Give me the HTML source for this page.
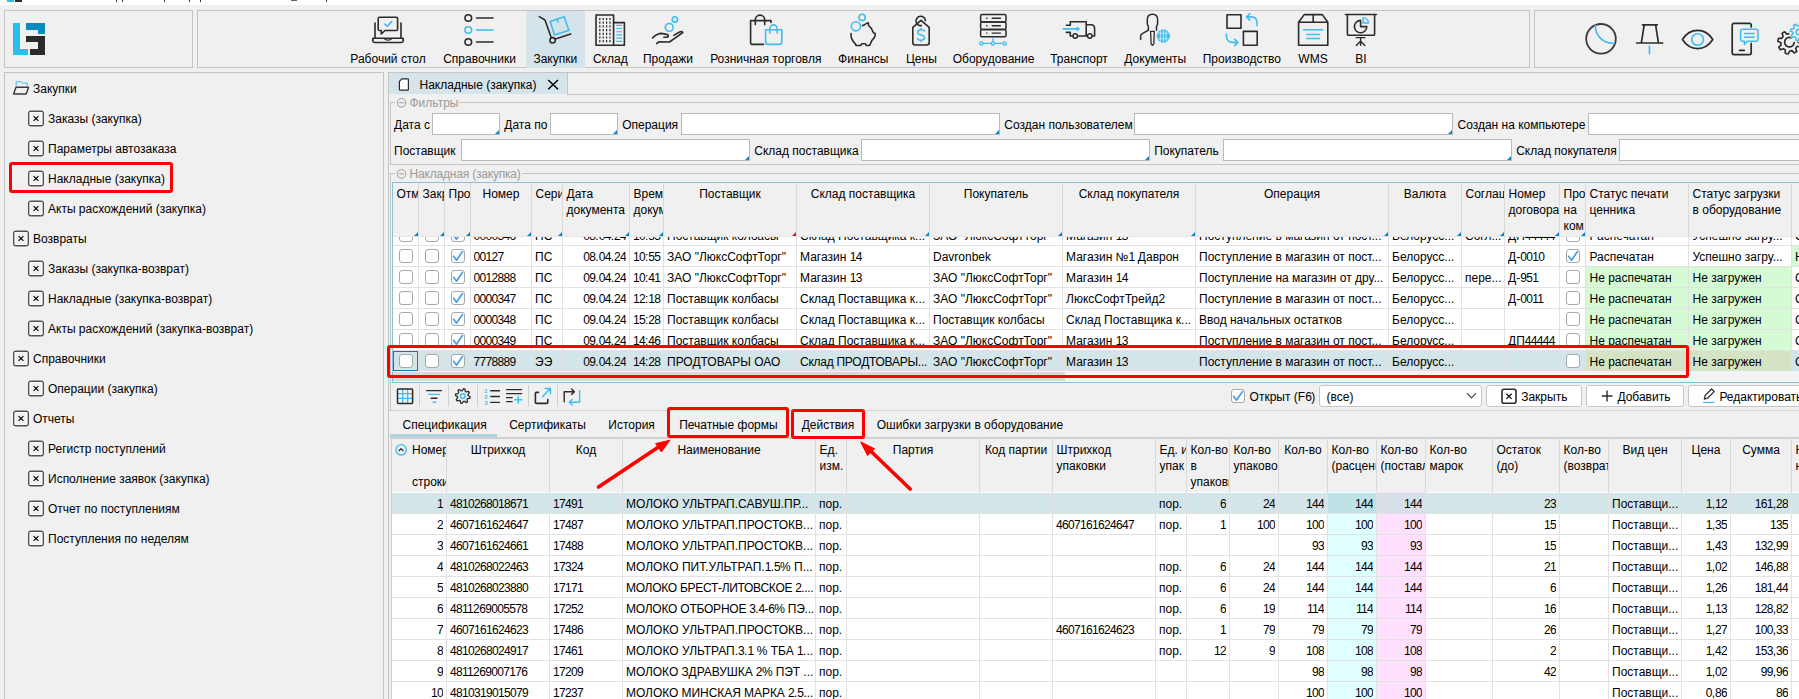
<!DOCTYPE html><html><head><meta charset="utf-8"><style>
html,body{margin:0;padding:0;}
body{width:1799px;height:699px;overflow:hidden;position:relative;background:#f0f0f0;font-family:"Liberation Sans",sans-serif;font-size:12px;color:#000;}
.a{position:absolute;}
.t{white-space:pre;line-height:16px;}
.g{color:#9a9a9a;}
.d{letter-spacing:-0.67px;}
.c{overflow:hidden;}
svg{overflow:visible}
</style></head><body><div class="a" style="left:0px;top:0px;width:1799px;height:5px;background:#fff"></div>
<div class="a" style="left:7px;top:0px;width:7px;height:2px;background:#29c0f0"></div>
<div class="a" style="left:15px;top:0px;width:7px;height:2px;background:#2b2b2b"></div>
<div class="a" style="left:116px;top:0px;width:1px;height:2px;background:#3a2a4a"></div>
<div class="a" style="left:122px;top:0px;width:1px;height:2px;background:#3a2a4a"></div>
<div class="a" style="left:164px;top:0px;width:1px;height:2px;background:#3a2a4a"></div>
<div class="a" style="left:189px;top:0px;width:1px;height:2px;background:#3a2a4a"></div>
<div class="a" style="left:200px;top:0px;width:1px;height:2px;background:#3a2a4a"></div>
<div class="a" style="left:326px;top:0px;width:1px;height:2px;background:#3a2a4a"></div>
<div class="a" style="left:291px;top:0px;width:6px;height:1px;background:#6a5a7a"></div>
<div class="a" style="left:4px;top:10px;width:189px;height:58px;border:1px solid #c4c4c4;box-sizing:border-box"></div>
<div class="a" style="left:197px;top:10px;width:1333px;height:58px;border:1px solid #c4c4c4;box-sizing:border-box"></div>
<div class="a" style="left:1534px;top:10px;width:300px;height:58px;border:1px solid #c4c4c4;box-sizing:border-box"></div>
<svg class="a" style="left:13px;top:23px" width="33" height="33" viewBox="0 0 33 33"><path d="M0 0h7v26h8v6H0z" fill="#29c0f0"/><path d="M13 0h19v11h-7V7H13z" fill="#0a8bbf"/><path d="M13 13h19v19H17v-6h8v-7H13z" fill="#2b2b2b"/></svg>
<div class="a" style="left:526px;top:11px;width:59px;height:57px;background:#d5e4ea;border-radius:3px 3px 0 0"></div>
<div class="a t " style="left:328px;top:51px;width:120px;text-align:center;">Рабочий стол</div>
<div class="a t " style="left:419.5px;top:51px;width:120px;text-align:center;">Справочники</div>
<div class="a t " style="left:495.3px;top:51px;width:120px;text-align:center;">Закупки</div>
<div class="a t " style="left:550.3px;top:51px;width:120px;text-align:center;">Склад</div>
<div class="a t " style="left:608px;top:51px;width:120px;text-align:center;">Продажи</div>
<div class="a t " style="left:705.8px;top:51px;width:120px;text-align:center;">Розничная торговля</div>
<div class="a t " style="left:803.3px;top:51px;width:120px;text-align:center;">Финансы</div>
<div class="a t " style="left:861.4px;top:51px;width:120px;text-align:center;">Цены</div>
<div class="a t " style="left:933.5px;top:51px;width:120px;text-align:center;">Оборудование</div>
<div class="a t " style="left:1019px;top:51px;width:120px;text-align:center;">Транспорт</div>
<div class="a t " style="left:1095.3px;top:51px;width:120px;text-align:center;">Документы</div>
<div class="a t " style="left:1181.8px;top:51px;width:120px;text-align:center;">Производство</div>
<div class="a t " style="left:1253px;top:51px;width:120px;text-align:center;">WMS</div>
<div class="a t " style="left:1301px;top:51px;width:120px;text-align:center;">BI</div>
<svg class="a" style="left:0;top:0" width="1799" height="70" viewBox="0 0 1799 70"><path d="M375 23V38M401 23V38" fill="none" stroke="#2b2b2b" stroke-width="1.6" stroke-linecap="round" stroke-linejoin="round" /><path d="M372.8 38.2H403.2V40.5Q403.2 42.5 401.2 42.5H374.8Q372.8 42.5 372.8 40.5Z" fill="none" stroke="#2b2b2b" stroke-width="1.6" stroke-linecap="round" stroke-linejoin="round" /><path d="M384 38.6Q385.5 40.2 388 40.2Q390.5 40.2 392 38.6" fill="none" stroke="#2b2b2b" stroke-width="1.2" stroke-linecap="round" stroke-linejoin="round" /><path d="M379.5 17.3H396.3Q397.6 17.3 397.6 18.6V29.2Q397.6 30.5 396.3 30.5H385L381.3 34V30.5H379.5Q378.2 30.5 378.2 29.2V18.6Q378.2 17.3 379.5 17.3Z" fill="none" stroke="#2b2b2b" stroke-width="1.6" stroke-linecap="round" stroke-linejoin="round" /><path d="M384.6 24L387.4 26.3L391.6 21.6" fill="none" stroke="#3dbdf0" stroke-width="1.6" stroke-linecap="round" stroke-linejoin="round" /><circle cx="468.3" cy="18" r="3.3" fill="none" stroke="#2b2b2b" stroke-width="1.6"/><path d="M476.5 18H493" fill="none" stroke="#2b2b2b" stroke-width="1.6" stroke-linecap="round" stroke-linejoin="round" /><circle cx="468.3" cy="30" r="3.3" fill="none" stroke="#3dbdf0" stroke-width="1.6"/><path d="M476.5 30H493" fill="none" stroke="#3dbdf0" stroke-width="1.6" stroke-linecap="round" stroke-linejoin="round" /><circle cx="468.3" cy="42" r="3.3" fill="none" stroke="#2b2b2b" stroke-width="1.6"/><path d="M476.5 42H493" fill="none" stroke="#2b2b2b" stroke-width="1.6" stroke-linecap="round" stroke-linejoin="round" /><path d="M539.3 16.6L545 20L551.2 37.6" fill="none" stroke="#2b2b2b" stroke-width="1.6" stroke-linecap="round" stroke-linejoin="round" /><circle cx="552.6" cy="40.3" r="2.7" fill="none" stroke="#2b2b2b" stroke-width="1.6"/><path d="M555.4 39.1L570.8 34.1" fill="none" stroke="#2b2b2b" stroke-width="1.6" stroke-linecap="round" stroke-linejoin="round" /><path d="M550.2 21.4L564.1 16.7L568.9 30.3L554.5 35Z" fill="none" stroke="#3dbdf0" stroke-width="1.6" stroke-linecap="round" stroke-linejoin="round" /><path d="M557.1 19L558.2 22.3" fill="none" stroke="#3dbdf0" stroke-width="1.4" stroke-linecap="round" stroke-linejoin="round" /><path d="M596 15H613.6V45.3H596Z" fill="none" stroke="#2b2b2b" stroke-width="1.6" stroke-linecap="round" stroke-linejoin="round" /><path d="M613.6 22.6H624.4V45.3H613.6" fill="none" stroke="#2b2b2b" stroke-width="1.6" stroke-linecap="round" stroke-linejoin="round" /><path d="M599.1999999999999 17.9h1.2v2.2h-1.2z" fill="#2b2b2b"/><path d="M599.1999999999999 21.599999999999998h1.2v2.2h-1.2z" fill="#2b2b2b"/><path d="M599.1999999999999 25.299999999999997h1.2v2.2h-1.2z" fill="#2b2b2b"/><path d="M599.1999999999999 29.0h1.2v2.2h-1.2z" fill="#2b2b2b"/><path d="M599.1999999999999 32.699999999999996h1.2v2.2h-1.2z" fill="#2b2b2b"/><path d="M599.1999999999999 36.4h1.2v2.2h-1.2z" fill="#2b2b2b"/><path d="M599.1999999999999 40.1h1.2v2.2h-1.2z" fill="#2b2b2b"/><path d="M602.6 17.9h1.2v2.2h-1.2z" fill="#2b2b2b"/><path d="M602.6 21.599999999999998h1.2v2.2h-1.2z" fill="#2b2b2b"/><path d="M602.6 25.299999999999997h1.2v2.2h-1.2z" fill="#2b2b2b"/><path d="M602.6 29.0h1.2v2.2h-1.2z" fill="#2b2b2b"/><path d="M602.6 32.699999999999996h1.2v2.2h-1.2z" fill="#2b2b2b"/><path d="M602.6 36.4h1.2v2.2h-1.2z" fill="#2b2b2b"/><path d="M602.6 40.1h1.2v2.2h-1.2z" fill="#2b2b2b"/><path d="M606.0 17.9h1.2v2.2h-1.2z" fill="#2b2b2b"/><path d="M606.0 21.599999999999998h1.2v2.2h-1.2z" fill="#2b2b2b"/><path d="M606.0 25.299999999999997h1.2v2.2h-1.2z" fill="#2b2b2b"/><path d="M606.0 29.0h1.2v2.2h-1.2z" fill="#2b2b2b"/><path d="M606.0 32.699999999999996h1.2v2.2h-1.2z" fill="#2b2b2b"/><path d="M606.0 36.4h1.2v2.2h-1.2z" fill="#2b2b2b"/><path d="M606.0 40.1h1.2v2.2h-1.2z" fill="#2b2b2b"/><path d="M609.4 17.9h1.2v2.2h-1.2z" fill="#2b2b2b"/><path d="M609.4 21.599999999999998h1.2v2.2h-1.2z" fill="#2b2b2b"/><path d="M609.4 25.299999999999997h1.2v2.2h-1.2z" fill="#2b2b2b"/><path d="M609.4 29.0h1.2v2.2h-1.2z" fill="#2b2b2b"/><path d="M609.4 32.699999999999996h1.2v2.2h-1.2z" fill="#2b2b2b"/><path d="M609.4 36.4h1.2v2.2h-1.2z" fill="#2b2b2b"/><path d="M609.4 40.1h1.2v2.2h-1.2z" fill="#2b2b2b"/><path d="M616.6 25.30H621.6" fill="none" stroke="#3dbdf0" stroke-width="1.2" stroke-linecap="round" stroke-linejoin="round" /><path d="M616.6 28.52H621.6" fill="none" stroke="#3dbdf0" stroke-width="1.2" stroke-linecap="round" stroke-linejoin="round" /><path d="M616.6 31.74H621.6" fill="none" stroke="#3dbdf0" stroke-width="1.2" stroke-linecap="round" stroke-linejoin="round" /><path d="M616.6 34.96H621.6" fill="none" stroke="#3dbdf0" stroke-width="1.2" stroke-linecap="round" stroke-linejoin="round" /><path d="M616.6 38.18H621.6" fill="none" stroke="#3dbdf0" stroke-width="1.2" stroke-linecap="round" stroke-linejoin="round" /><path d="M616.6 41.40H621.6" fill="none" stroke="#3dbdf0" stroke-width="1.2" stroke-linecap="round" stroke-linejoin="round" /><circle cx="669.2" cy="27.4" r="3.9" fill="none" stroke="#3dbdf0" stroke-width="1.6"/><circle cx="674.9" cy="19.4" r="2.7" fill="none" stroke="#3dbdf0" stroke-width="1.6"/><path d="M652.5 37.8C655.5 35.2 658.5 33.4 661.5 33.4L667.6 34.6C669 35.3 668.4 37.1 666.4 37.2L663.8 37.2" fill="none" stroke="#2b2b2b" stroke-width="1.6" stroke-linecap="round" stroke-linejoin="round" /><path d="M656.6 43.6L658.8 41.9L669.5 42L682.8 32.6C682.5 31.4 680.8 31.4 679.2 32.3L673.8 35.4" fill="none" stroke="#2b2b2b" stroke-width="1.6" stroke-linecap="round" stroke-linejoin="round" /><path d="M771 22.5V20.6H750.6V42.4Q750.6 44.4 752.6 44.4H763.5" fill="none" stroke="#2b2b2b" stroke-width="1.6" stroke-linecap="round" stroke-linejoin="round" /><path d="M755.3 24.6V19.8A4.7 4.7 0 0 1 764.7 19.8V24.6" fill="none" stroke="#2b2b2b" stroke-width="1.6" stroke-linecap="round" stroke-linejoin="round" /><path d="M765.6 29.8H781.8V41.9Q781.8 44.4 779.3 44.4H768.1Q765.6 44.4 765.6 41.9Z" fill="none" stroke="#3dbdf0" stroke-width="1.6" stroke-linecap="round" stroke-linejoin="round" /><path d="M769.8 33V28.6A3.7 3.7 0 0 1 777.2 28.6V33" fill="none" stroke="#3dbdf0" stroke-width="1.6" stroke-linecap="round" stroke-linejoin="round" /><circle cx="855.9" cy="26.3" r="4.6" fill="none" stroke="#3dbdf0" stroke-width="1.6"/><circle cx="862.1" cy="17.4" r="3.1" fill="none" stroke="#3dbdf0" stroke-width="1.6"/><path d="M851 33.5C850.5 38 852.5 41 855 43.3L856.2 45.5H860.8L861.6 43.8H865.4L866.2 45.5H869.6L871.8 40.6C873.6 39 875.2 37.2 875.2 34.8V33.6L873.4 32.8C872.3 29.6 870.6 27 868.4 25.2V22.8C866.8 23 865.6 23.8 864.6 24.8L862.6 25.6" fill="none" stroke="#2b2b2b" stroke-width="1.6" stroke-linecap="round" stroke-linejoin="round" /><path d="M921 20.3L929.2 27.3V42.5Q929.2 45 926.7 45H915.3Q912.8 45 912.8 42.5V27.3Z" fill="none" stroke="#2b2b2b" stroke-width="1.6" stroke-linecap="round" stroke-linejoin="round" /><path d="M925.4 20.6A4.7 4.7 0 1 0 921.3 25.6" fill="none" stroke="#2b2b2b" stroke-width="1.6" stroke-linecap="round" stroke-linejoin="round" /><path d="M924.6 31.1Q923.8 29.8 921.1 29.8Q917.7 29.8 917.7 32.3Q917.7 34.5 921 34.9Q924.5 35.3 924.5 37.7Q924.5 40.2 921 40.2Q918.2 40.2 917.4 38.7M921.1 28.3V29.8M921.1 40.2V41.7" fill="none" stroke="#3dbdf0" stroke-width="1.5" stroke-linecap="round" stroke-linejoin="round" /><path d="M982 14.6H1004.6Q1006 14.6 1006 16.0V20.6Q1006 22.0 1004.6 22.0H982Q980.6 22.0 980.6 20.6V16.0Q980.6 14.6 982 14.6Z" fill="none" stroke="#2b2b2b" stroke-width="1.5" stroke-linecap="round" stroke-linejoin="round" /><path d="M986.2 17.60h1.3v1.4h-1.3z" fill="#2b2b2b"/><path d="M992.2 18.30H1000.4" fill="none" stroke="#2b2b2b" stroke-width="1.4" stroke-linecap="round" stroke-linejoin="round" /><path d="M982 22.0H1004.6Q1006 22.0 1006 23.4V28.0Q1006 29.4 1004.6 29.4H982Q980.6 29.4 980.6 28.0V23.4Q980.6 22.0 982 22.0Z" fill="none" stroke="#2b2b2b" stroke-width="1.5" stroke-linecap="round" stroke-linejoin="round" /><path d="M986.2 25.00h1.3v1.4h-1.3z" fill="#2b2b2b"/><path d="M992.2 25.70H1000.4" fill="none" stroke="#2b2b2b" stroke-width="1.4" stroke-linecap="round" stroke-linejoin="round" /><path d="M982 29.4H1004.6Q1006 29.4 1006 30.799999999999997V35.4Q1006 36.8 1004.6 36.8H982Q980.6 36.8 980.6 35.4V30.799999999999997Q980.6 29.4 982 29.4Z" fill="none" stroke="#2b2b2b" stroke-width="1.5" stroke-linecap="round" stroke-linejoin="round" /><path d="M986.2 32.40h1.3v1.4h-1.3z" fill="#2b2b2b"/><path d="M992.2 33.10H1000.4" fill="none" stroke="#2b2b2b" stroke-width="1.4" stroke-linecap="round" stroke-linejoin="round" /><path d="M982.8 43.4H991.2M994.8 43.4H1002.8M993 37.8V41.6" fill="none" stroke="#3dbdf0" stroke-width="1.3" stroke-linecap="round" stroke-linejoin="round" /><circle cx="981.4" cy="43.4" r="1.6" fill="#f0f0f0" stroke="#3dbdf0" stroke-width="1.3"/><circle cx="993" cy="43.4" r="1.6" fill="#f0f0f0" stroke="#3dbdf0" stroke-width="1.3"/><circle cx="1004.6" cy="43.4" r="1.6" fill="#f0f0f0" stroke="#3dbdf0" stroke-width="1.3"/><path d="M1066.4 25.3H1070.3V21.7H1086.2V36M1086.2 24.7H1091.2C1093.2 24.7 1094.6 26.4 1094.6 28.6V36H1070.3V32.4H1066.4" fill="none" stroke="#2b2b2b" stroke-width="1.6" stroke-linecap="round" stroke-linejoin="round" /><circle cx="1075.2" cy="36" r="2.2" fill="#f0f0f0" stroke="#2b2b2b" stroke-width="1.5"/><circle cx="1089.8" cy="36" r="2.2" fill="#f0f0f0" stroke="#2b2b2b" stroke-width="1.5"/><path d="M1063.4 28.9H1077" fill="none" stroke="#3dbdf0" stroke-width="1.7" stroke-linecap="round" stroke-linejoin="round" /><path d="M1076.6 26.1L1080.2 28.9L1076.6 31.7Z" fill="#3dbdf0"/><path d="M1148.4 30.2V26.4Q1147.3 25.4 1147.3 23.2V19.6Q1147.3 14.3 1152.45 14.3Q1157.6 14.3 1157.6 19.6V23.2Q1157.6 25.4 1156.5 26.4V30.2" fill="none" stroke="#2b2b2b" stroke-width="1.5" stroke-linecap="round" stroke-linejoin="round" /><path d="M1148.4 30.2L1142 33.9Q1140.6 34.8 1140.6 36.4V39.4" fill="none" stroke="#2b2b2b" stroke-width="1.5" stroke-linecap="round" stroke-linejoin="round" /><path d="M1150.6 31.3H1154.3L1153.8 44L1152.45 45.4L1151.1 44Z" fill="none" stroke="#2b2b2b" stroke-width="1.3" stroke-linecap="round" stroke-linejoin="round" /><circle cx="1163.3" cy="36" r="6.3" fill="#3dbdf0" stroke="#3dbdf0" stroke-width="0.8"/><path d="M1160.6 30.8V41.2M1163.3 30V42M1166 30.8V41.2M1157.8 33.2H1168.8M1157.8 38.8H1168.8" fill="none" stroke="#e8f6fc" stroke-width="0.7" stroke-linecap="round" stroke-linejoin="round" /><path d="M1227 14.8H1241V28.2H1227Z" fill="none" stroke="#2b2b2b" stroke-width="1.6" stroke-linecap="round" stroke-linejoin="round" /><path d="M1243.4 31.4H1257.2V45.2H1243.4Z" fill="none" stroke="#2b2b2b" stroke-width="1.6" stroke-linecap="round" stroke-linejoin="round" /><path d="M1257 25.6V22C1257 19.2 1254.6 16.9 1251.8 16.9H1246.8M1249.9 13.7L1246.6 16.9L1249.9 20.1" fill="none" stroke="#3dbdf0" stroke-width="1.6" stroke-linecap="round" stroke-linejoin="round" /><path d="M1226.4 34V36.6C1226.4 40 1229 42.4 1232.2 42.4H1237.8M1234.7 39.2L1237.9 42.4L1234.7 45.6" fill="none" stroke="#3dbdf0" stroke-width="1.6" stroke-linecap="round" stroke-linejoin="round" /><path d="M1298.6 22.3V45.2H1327.8V22.3ZM1298.6 22.3L1304.2 14.6H1322.3L1327.8 22.3M1313.2 14.6V22.3" fill="none" stroke="#2b2b2b" stroke-width="1.6" stroke-linecap="round" stroke-linejoin="round" /><path d="M1303.4 29.8H1322.8M1306.8 34.4H1319.6M1306.8 38.6H1319.6" fill="none" stroke="#3dbdf0" stroke-width="1.5" stroke-linecap="round" stroke-linejoin="round" /><path d="M1345.4 14.5H1376.4M1347.4 14.7V34.2Q1347.4 35.3 1348.6 35.3H1373.4Q1374.6 35.3 1374.6 34.2V14.7" fill="none" stroke="#2b2b2b" stroke-width="1.6" stroke-linecap="round" stroke-linejoin="round" /><path d="M1360.6 20.4A6.2 6.2 0 1 0 1366.8 26.6H1360.6Z" fill="none" stroke="#2b2b2b" stroke-width="1.6" stroke-linecap="round" stroke-linejoin="round" /><path d="M1363.1 17.6A5.6 5.6 0 0 1 1368.5 23H1363.1Z" fill="none" stroke="#3dbdf0" stroke-width="1.4" stroke-linecap="round" stroke-linejoin="round" /><path d="M1356.2 37.6H1365M1360.6 37.6V45.4M1356.4 45.4L1360.6 41L1364.8 45.4" fill="none" stroke="#2b2b2b" stroke-width="1.4" stroke-linecap="round" stroke-linejoin="round" /><circle cx="1601" cy="38.8" r="14.8" fill="none" stroke="#3a3a3a" stroke-width="1.8"/><path d="M1595.4 25.3C1594.8 35.4 1603.6 44.2 1614.2 43.2" fill="none" stroke="#3dbdf0" stroke-width="1.6" stroke-linecap="round" stroke-linejoin="round" /><path d="M1642.5 24.8H1657.3M1644.2 24.8L1641.4 42.6M1655.6 24.8L1658.4 42.6M1636.6 43H1662.6" fill="none" stroke="#2b2b2b" stroke-width="1.7" stroke-linecap="round" stroke-linejoin="round" /><path d="M1649.5 46.2V53.8" fill="none" stroke="#3dbdf0" stroke-width="1.6" stroke-linecap="round" stroke-linejoin="round" /><path d="M1682.4 39.5C1690.2 27.4 1705 27.4 1712.8 39.5C1705 51.6 1690.2 51.6 1682.4 39.5Z" fill="none" stroke="#2b2b2b" stroke-width="1.7" stroke-linecap="round" stroke-linejoin="round" /><circle cx="1697.6" cy="39.5" r="5.8" fill="none" stroke="#3dbdf0" stroke-width="1.6"/><path d="M1751.2 27V25.2Q1751.2 23.4 1749.4 23.4H1734Q1732.2 23.4 1732.2 25.2V52.8Q1732.2 54.6 1734 54.6H1749.4Q1751.2 54.6 1751.2 52.8V43.4M1739.6 50.4H1744.2" fill="none" stroke="#2b2b2b" stroke-width="1.7" stroke-linecap="round" stroke-linejoin="round" /><path d="M1742.6 29.2H1756Q1758 29.2 1758 31.2V39.2Q1758 41.2 1756 41.2H1747.4L1744.4 44.4V41.2H1742.6Q1740.6 41.2 1740.6 39.2V31.2Q1740.6 29.2 1742.6 29.2Z" fill="none" stroke="#3dbdf0" stroke-width="1.5" stroke-linecap="round" stroke-linejoin="round" /><path d="M1744.6 33.6H1754.2M1744.6 37.2H1754.2" fill="none" stroke="#3dbdf0" stroke-width="1.5" stroke-linecap="round" stroke-linejoin="round" /><path d="M1790.56 30.86L1792.05 31.11L1793.51 31.55L1793.47 34.82L1794.42 35.42L1795.29 36.13L1798.38 35.06L1799.26 36.29L1799.97 37.63L1797.63 39.92L1797.89 41.01L1798.00 42.13L1800.94 43.56L1800.69 45.05L1800.25 46.51L1796.98 46.47L1796.38 47.42L1795.67 48.29L1796.74 51.38L1795.51 52.26L1794.17 52.97L1791.88 50.63L1790.79 50.89L1789.67 51.00L1788.24 53.94L1786.75 53.69L1785.29 53.25L1785.33 49.98L1784.38 49.38L1783.51 48.67L1780.42 49.74L1779.54 48.51L1778.83 47.17L1781.17 44.88L1780.91 43.79L1780.80 42.67L1777.86 41.24L1778.11 39.75L1778.55 38.29L1781.82 38.33L1782.42 37.38L1783.13 36.51L1782.06 33.42L1783.29 32.54L1784.63 31.83L1786.92 34.17L1788.01 33.91L1789.13 33.80Z" fill="none" stroke="#2b2b2b" stroke-width="1.6" stroke-linecap="round" stroke-linejoin="round" /><path d="M1792.2 38.2A4.8 4.8 0 1 0 1794.2 42.6" fill="none" stroke="#2b2b2b" stroke-width="1.7" stroke-linecap="round" stroke-linejoin="round" /><circle cx="1799" cy="32" r="10" fill="#f0f0f0"/><path d="M1799.86 23.44L1800.97 23.63L1802.04 23.96L1802.03 26.36L1802.74 26.80L1803.38 27.34L1805.66 26.56L1806.31 27.47L1806.84 28.47L1805.13 30.15L1805.32 30.97L1805.40 31.80L1807.56 32.86L1807.37 33.97L1807.04 35.04L1804.64 35.03L1804.20 35.74L1803.66 36.38L1804.44 38.66L1803.53 39.31L1802.53 39.84L1800.85 38.13L1800.03 38.32L1799.20 38.40L1798.14 40.56L1797.03 40.37L1795.96 40.04L1795.97 37.64L1795.26 37.20L1794.62 36.66L1792.34 37.44L1791.69 36.53L1791.16 35.53L1792.87 33.85L1792.68 33.03L1792.60 32.20L1790.44 31.14L1790.63 30.03L1790.96 28.96L1793.36 28.97L1793.80 28.26L1794.34 27.62L1793.56 25.34L1794.47 24.69L1795.47 24.16L1797.15 25.87L1797.97 25.68L1798.80 25.60Z" fill="none" stroke="#3dbdf0" stroke-width="1.5" stroke-linecap="round" stroke-linejoin="round" /><circle cx="1799" cy="32" r="2.8" fill="none" stroke="#3dbdf0" stroke-width="1.5"/></svg>
<div class="a" style="left:4px;top:72px;width:380px;height:700px;border:1px solid #c4c4c4;box-sizing:border-box"></div>
<div class="a t " style="left:33px;top:81px;">Закупки</div>
<div class="a t " style="left:48px;top:111px;">Заказы (закупка)</div>
<div class="a t " style="left:48px;top:141px;">Параметры автозаказа</div>
<div class="a t " style="left:48px;top:171px;">Накладные (закупка)</div>
<div class="a t " style="left:48px;top:201px;">Акты расхождений (закупка)</div>
<div class="a t " style="left:33px;top:231px;">Возвраты</div>
<div class="a t " style="left:48px;top:261px;">Заказы (закупка-возврат)</div>
<div class="a t " style="left:48px;top:291px;">Накладные (закупка-возврат)</div>
<div class="a t " style="left:48px;top:321px;">Акты расхождений (закупка-возврат)</div>
<div class="a t " style="left:33px;top:351px;">Справочники</div>
<div class="a t " style="left:48px;top:381px;">Операции (закупка)</div>
<div class="a t " style="left:33px;top:411px;">Отчеты</div>
<div class="a t " style="left:48px;top:441px;">Регистр поступлений</div>
<div class="a t " style="left:48px;top:471px;">Исполнение заявок (закупка)</div>
<div class="a t " style="left:48px;top:501px;">Отчет по поступлениям</div>
<div class="a t " style="left:48px;top:531px;">Поступления по неделям</div>
<svg class="a" style="left:0;top:0" width="384" height="699"><path d="M16.2 86.6V81.6H21L22.6 83.2H27.2V86" fill="none" stroke="#6cc6ee" stroke-width="1.3"/><path d="M16 87.2H28.6L26.2 94H13.6Z" fill="none" stroke="#3a3a3a" stroke-width="1.4" stroke-linejoin="round"/><rect x="28.8" y="111.3" width="14.4" height="14.4" rx="2.2" fill="none" stroke="#505050" stroke-width="1.6"/><rect x="30.1" y="112.6" width="11.8" height="11.8" fill="none" stroke="#fff" stroke-width="1"/><path d="M33.6 116.1L38.4 120.9M38.4 116.1L33.6 120.9" stroke="#000" stroke-width="1.15"/><rect x="28.8" y="141.3" width="14.4" height="14.4" rx="2.2" fill="none" stroke="#505050" stroke-width="1.6"/><rect x="30.1" y="142.6" width="11.8" height="11.8" fill="none" stroke="#fff" stroke-width="1"/><path d="M33.6 146.1L38.4 150.9M38.4 146.1L33.6 150.9" stroke="#000" stroke-width="1.15"/><rect x="28.8" y="171.3" width="14.4" height="14.4" rx="2.2" fill="none" stroke="#505050" stroke-width="1.6"/><rect x="30.1" y="172.6" width="11.8" height="11.8" fill="none" stroke="#fff" stroke-width="1"/><path d="M33.6 176.1L38.4 180.9M38.4 176.1L33.6 180.9" stroke="#000" stroke-width="1.15"/><rect x="28.8" y="201.3" width="14.4" height="14.4" rx="2.2" fill="none" stroke="#505050" stroke-width="1.6"/><rect x="30.1" y="202.6" width="11.8" height="11.8" fill="none" stroke="#fff" stroke-width="1"/><path d="M33.6 206.1L38.4 210.9M38.4 206.1L33.6 210.9" stroke="#000" stroke-width="1.15"/><rect x="13.8" y="231.3" width="14.4" height="14.4" rx="2.2" fill="none" stroke="#505050" stroke-width="1.6"/><rect x="15.1" y="232.6" width="11.8" height="11.8" fill="none" stroke="#fff" stroke-width="1"/><path d="M18.6 236.1L23.4 240.9M23.4 236.1L18.6 240.9" stroke="#000" stroke-width="1.15"/><rect x="28.8" y="261.3" width="14.4" height="14.4" rx="2.2" fill="none" stroke="#505050" stroke-width="1.6"/><rect x="30.1" y="262.6" width="11.8" height="11.8" fill="none" stroke="#fff" stroke-width="1"/><path d="M33.6 266.1L38.4 270.9M38.4 266.1L33.6 270.9" stroke="#000" stroke-width="1.15"/><rect x="28.8" y="291.3" width="14.4" height="14.4" rx="2.2" fill="none" stroke="#505050" stroke-width="1.6"/><rect x="30.1" y="292.6" width="11.8" height="11.8" fill="none" stroke="#fff" stroke-width="1"/><path d="M33.6 296.1L38.4 300.9M38.4 296.1L33.6 300.9" stroke="#000" stroke-width="1.15"/><rect x="28.8" y="321.3" width="14.4" height="14.4" rx="2.2" fill="none" stroke="#505050" stroke-width="1.6"/><rect x="30.1" y="322.6" width="11.8" height="11.8" fill="none" stroke="#fff" stroke-width="1"/><path d="M33.6 326.1L38.4 330.9M38.4 326.1L33.6 330.9" stroke="#000" stroke-width="1.15"/><rect x="13.8" y="351.3" width="14.4" height="14.4" rx="2.2" fill="none" stroke="#505050" stroke-width="1.6"/><rect x="15.1" y="352.6" width="11.8" height="11.8" fill="none" stroke="#fff" stroke-width="1"/><path d="M18.6 356.1L23.4 360.9M23.4 356.1L18.6 360.9" stroke="#000" stroke-width="1.15"/><rect x="28.8" y="381.3" width="14.4" height="14.4" rx="2.2" fill="none" stroke="#505050" stroke-width="1.6"/><rect x="30.1" y="382.6" width="11.8" height="11.8" fill="none" stroke="#fff" stroke-width="1"/><path d="M33.6 386.1L38.4 390.9M38.4 386.1L33.6 390.9" stroke="#000" stroke-width="1.15"/><rect x="13.8" y="411.3" width="14.4" height="14.4" rx="2.2" fill="none" stroke="#505050" stroke-width="1.6"/><rect x="15.1" y="412.6" width="11.8" height="11.8" fill="none" stroke="#fff" stroke-width="1"/><path d="M18.6 416.1L23.4 420.9M23.4 416.1L18.6 420.9" stroke="#000" stroke-width="1.15"/><rect x="28.8" y="441.3" width="14.4" height="14.4" rx="2.2" fill="none" stroke="#505050" stroke-width="1.6"/><rect x="30.1" y="442.6" width="11.8" height="11.8" fill="none" stroke="#fff" stroke-width="1"/><path d="M33.6 446.1L38.4 450.9M38.4 446.1L33.6 450.9" stroke="#000" stroke-width="1.15"/><rect x="28.8" y="471.3" width="14.4" height="14.4" rx="2.2" fill="none" stroke="#505050" stroke-width="1.6"/><rect x="30.1" y="472.6" width="11.8" height="11.8" fill="none" stroke="#fff" stroke-width="1"/><path d="M33.6 476.1L38.4 480.9M38.4 476.1L33.6 480.9" stroke="#000" stroke-width="1.15"/><rect x="28.8" y="501.3" width="14.4" height="14.4" rx="2.2" fill="none" stroke="#505050" stroke-width="1.6"/><rect x="30.1" y="502.6" width="11.8" height="11.8" fill="none" stroke="#fff" stroke-width="1"/><path d="M33.6 506.1L38.4 510.9M38.4 506.1L33.6 510.9" stroke="#000" stroke-width="1.15"/><rect x="28.8" y="531.3" width="14.4" height="14.4" rx="2.2" fill="none" stroke="#505050" stroke-width="1.6"/><rect x="30.1" y="532.6" width="11.8" height="11.8" fill="none" stroke="#fff" stroke-width="1"/><path d="M33.6 536.1L38.4 540.9M38.4 536.1L33.6 540.9" stroke="#000" stroke-width="1.15"/></svg>
<div class="a" style="left:388px;top:72px;width:1500px;height:700px;border:1px solid #c4c4c4;box-sizing:border-box"></div>
<div class="a" style="left:389px;top:73px;width:178px;height:21px;background:#d5e4ea"></div>
<div class="a" style="left:567px;top:73px;width:1px;height:22px;background:#c4c4c4"></div>
<div class="a" style="left:567px;top:94px;width:1300px;height:1px;background:#c4c4c4"></div>
<svg class="a" style="left:0;top:0" width="600" height="120"><path d="M401.8 78.8H407.6Q408.4 78.8 408.4 79.6V89.4Q408.4 90.2 407.6 90.2H400.2Q399.4 90.2 399.4 89.4V81.4Z" fill="#fff" stroke="#2b2b2b" stroke-width="1.2" stroke-linejoin="round"/><path d="M548.2 80L558 89.2M558 80L548.2 89.2" stroke="#000" stroke-width="1.5"/></svg>
<div class="a t " style="left:419.5px;top:77px;">Накладные (закупка)</div>
<div class="a" style="left:390px;top:102px;width:1500px;height:63px;border:1px solid #c4c4c4;box-sizing:border-box"></div>
<div class="a" style="left:395px;top:96px;width:64px;height:12px;background:#f0f0f0"></div>
<svg class="a" style="left:0;top:0" width="600" height="200"><circle cx="401.5" cy="102.8" r="4.3" fill="none" stroke="#9a9a9a" stroke-width="1"/><path d="M399 102.8H404" stroke="#9a9a9a" stroke-width="1"/><circle cx="401.5" cy="173.9" r="4.3" fill="none" stroke="#9a9a9a" stroke-width="1"/><path d="M399 173.9H404" stroke="#9a9a9a" stroke-width="1"/></svg>
<div class="a t g" style="left:409.5px;top:95px;">Фильтры</div>
<div class="a t " style="left:394px;top:117.30000000000001px;">Дата с</div>
<div class="a" style="left:432px;top:113px;width:68px;height:22px;background:#fff;border:1px solid #b9b9b9;box-sizing:border-box"></div>
<svg class="a" style="left:495px;top:130px" width="4" height="4"><path d="M4 0V4H0Z" fill="#1283c0"/></svg>
<div class="a t " style="left:504.3px;top:117.30000000000001px;">Дата по</div>
<div class="a" style="left:550px;top:113px;width:68px;height:22px;background:#fff;border:1px solid #b9b9b9;box-sizing:border-box"></div>
<svg class="a" style="left:613px;top:130px" width="4" height="4"><path d="M4 0V4H0Z" fill="#1283c0"/></svg>
<div class="a t " style="left:622.2px;top:117.30000000000001px;">Операция</div>
<div class="a" style="left:681px;top:113px;width:319px;height:22px;background:#fff;border:1px solid #b9b9b9;box-sizing:border-box"></div>
<svg class="a" style="left:995px;top:130px" width="4" height="4"><path d="M4 0V4H0Z" fill="#1283c0"/></svg>
<div class="a t " style="left:1004.3px;top:117.30000000000001px;">Создан пользователем</div>
<div class="a" style="left:1134px;top:113px;width:319px;height:22px;background:#fff;border:1px solid #b9b9b9;box-sizing:border-box"></div>
<svg class="a" style="left:1448px;top:130px" width="4" height="4"><path d="M4 0V4H0Z" fill="#1283c0"/></svg>
<div class="a t " style="left:1457.5px;top:117.30000000000001px;">Создан на компьютере</div>
<div class="a" style="left:1588px;top:113px;width:312px;height:22px;background:#fff;border:1px solid #b9b9b9;box-sizing:border-box"></div>
<div class="a t " style="left:394px;top:143.3px;">Поставщик</div>
<div class="a" style="left:461px;top:139px;width:289px;height:22px;background:#fff;border:1px solid #b9b9b9;box-sizing:border-box"></div>
<svg class="a" style="left:745px;top:156px" width="4" height="4"><path d="M4 0V4H0Z" fill="#1283c0"/></svg>
<div class="a t " style="left:754.3px;top:143.3px;">Склад поставщика</div>
<div class="a" style="left:861px;top:139px;width:289px;height:22px;background:#fff;border:1px solid #b9b9b9;box-sizing:border-box"></div>
<svg class="a" style="left:1145px;top:156px" width="4" height="4"><path d="M4 0V4H0Z" fill="#1283c0"/></svg>
<div class="a t " style="left:1154.2px;top:143.3px;">Покупатель</div>
<div class="a" style="left:1223px;top:139px;width:289px;height:22px;background:#fff;border:1px solid #b9b9b9;box-sizing:border-box"></div>
<svg class="a" style="left:1507px;top:156px" width="4" height="4"><path d="M4 0V4H0Z" fill="#1283c0"/></svg>
<div class="a t " style="left:1516.2px;top:143.3px;">Склад покупателя</div>
<div class="a" style="left:1619px;top:139px;width:281px;height:22px;background:#fff;border:1px solid #b9b9b9;box-sizing:border-box"></div>
<div class="a" style="left:390px;top:173px;width:1500px;height:238px;border:1px solid #c4c4c4;box-sizing:border-box"></div>
<div class="a" style="left:395px;top:167px;width:127px;height:12px;background:#f0f0f0"></div>
<div class="a t g" style="left:409.6px;top:166.3px;letter-spacing:-0.2px">Накладная (закупка)</div>
<svg class="a" style="left:0;top:0" width="600" height="200"><circle cx="401.5" cy="173.9" r="4.3" fill="none" stroke="#9a9a9a" stroke-width="1"/><path d="M399 173.9H404" stroke="#9a9a9a" stroke-width="1"/></svg>
<div class="a" style="left:392px;top:182px;width:1500px;height:1px;background:#88c0dc"></div>
<div class="a" style="left:392px;top:182px;width:1px;height:201px;background:#88c0dc"></div>
<div class="a" style="left:392px;top:382px;width:1500px;height:1px;background:#88c0dc"></div>
<div class="a" style="left:393px;top:183px;width:1500px;height:53px;background:#f0f0f0"></div>
<div class="a c" style="left:393px;top:183px;width:25px;height:53px"><div class="a t" style="left:3.5px;top:3px">Отм</div></div>
<svg class="a" style="left:414px;top:232px" width="4" height="4"><path d="M4 0V4H0Z" fill="#0a84c0"/></svg>
<div class="a c" style="left:419px;top:183px;width:25px;height:53px"><div class="a t" style="left:3.5px;top:3px">Закр</div></div>
<div class="a" style="left:418px;top:183px;width:1px;height:53px;background:#dadada"></div>
<svg class="a" style="left:440px;top:232px" width="4" height="4"><path d="M4 0V4H0Z" fill="#0a84c0"/></svg>
<div class="a c" style="left:445px;top:183px;width:25px;height:53px"><div class="a t" style="left:3.5px;top:3px">Про</div></div>
<div class="a" style="left:444px;top:183px;width:1px;height:53px;background:#dadada"></div>
<svg class="a" style="left:466px;top:232px" width="4" height="4"><path d="M4 0V4H0Z" fill="#0a84c0"/></svg>
<div class="a c" style="left:471px;top:183px;width:60px;height:53px"><div class="a t" style="left:0;top:3px;width:60px;text-align:center">Номер</div></div>
<div class="a" style="left:470px;top:183px;width:1px;height:53px;background:#dadada"></div>
<svg class="a" style="left:527px;top:232px" width="4" height="4"><path d="M4 0V4H0Z" fill="#0a84c0"/></svg>
<div class="a c" style="left:532px;top:183px;width:30px;height:53px"><div class="a t" style="left:3.5px;top:3px">Серия</div></div>
<div class="a" style="left:531px;top:183px;width:1px;height:53px;background:#dadada"></div>
<svg class="a" style="left:558px;top:232px" width="4" height="4"><path d="M4 0V4H0Z" fill="#0a84c0"/></svg>
<div class="a c" style="left:563px;top:183px;width:66px;height:53px"><div class="a t" style="left:3.5px;top:3px">Дата</div><div class="a t" style="left:3.5px;top:19px">документа</div></div>
<div class="a" style="left:562px;top:183px;width:1px;height:53px;background:#dadada"></div>
<svg class="a" style="left:625px;top:232px" width="4" height="4"><path d="M4 0V4H0Z" fill="#0a84c0"/></svg>
<div class="a c" style="left:630px;top:183px;width:33px;height:53px"><div class="a t" style="left:3.5px;top:3px">Время</div><div class="a t" style="left:3.5px;top:19px">документа</div></div>
<div class="a" style="left:629px;top:183px;width:1px;height:53px;background:#dadada"></div>
<svg class="a" style="left:659px;top:232px" width="4" height="4"><path d="M4 0V4H0Z" fill="#0a84c0"/></svg>
<div class="a c" style="left:664px;top:183px;width:132px;height:53px"><div class="a t" style="left:0;top:3px;width:132px;text-align:center">Поставщик</div></div>
<div class="a" style="left:663px;top:183px;width:1px;height:53px;background:#dadada"></div>
<svg class="a" style="left:792px;top:232px" width="4" height="4"><path d="M4 0V4H0Z" fill="#e8141b"/></svg>
<div class="a c" style="left:797px;top:183px;width:132px;height:53px"><div class="a t" style="left:0;top:3px;width:132px;text-align:center">Склад поставщика</div></div>
<div class="a" style="left:796px;top:183px;width:1px;height:53px;background:#dadada"></div>
<svg class="a" style="left:925px;top:232px" width="4" height="4"><path d="M4 0V4H0Z" fill="#0a84c0"/></svg>
<div class="a c" style="left:930px;top:183px;width:132px;height:53px"><div class="a t" style="left:0;top:3px;width:132px;text-align:center">Покупатель</div></div>
<div class="a" style="left:929px;top:183px;width:1px;height:53px;background:#dadada"></div>
<svg class="a" style="left:1058px;top:232px" width="4" height="4"><path d="M4 0V4H0Z" fill="#0a84c0"/></svg>
<div class="a c" style="left:1063px;top:183px;width:132px;height:53px"><div class="a t" style="left:0;top:3px;width:132px;text-align:center">Склад покупателя</div></div>
<div class="a" style="left:1062px;top:183px;width:1px;height:53px;background:#dadada"></div>
<svg class="a" style="left:1191px;top:232px" width="4" height="4"><path d="M4 0V4H0Z" fill="#0a84c0"/></svg>
<div class="a c" style="left:1196px;top:183px;width:192px;height:53px"><div class="a t" style="left:0;top:3px;width:192px;text-align:center">Операция</div></div>
<div class="a" style="left:1195px;top:183px;width:1px;height:53px;background:#dadada"></div>
<svg class="a" style="left:1384px;top:232px" width="4" height="4"><path d="M4 0V4H0Z" fill="#0a84c0"/></svg>
<div class="a c" style="left:1389px;top:183px;width:72px;height:53px"><div class="a t" style="left:0;top:3px;width:72px;text-align:center">Валюта</div></div>
<div class="a" style="left:1388px;top:183px;width:1px;height:53px;background:#dadada"></div>
<svg class="a" style="left:1457px;top:232px" width="4" height="4"><path d="M4 0V4H0Z" fill="#0a84c0"/></svg>
<div class="a c" style="left:1462px;top:183px;width:42px;height:53px"><div class="a t" style="left:3.5px;top:3px">Соглашение</div></div>
<div class="a" style="left:1461px;top:183px;width:1px;height:53px;background:#dadada"></div>
<svg class="a" style="left:1500px;top:232px" width="4" height="4"><path d="M4 0V4H0Z" fill="#0a84c0"/></svg>
<div class="a c" style="left:1505px;top:183px;width:54px;height:53px"><div class="a t" style="left:3.5px;top:3px">Номер</div><div class="a t" style="left:3.5px;top:19px">договора</div></div>
<div class="a" style="left:1504px;top:183px;width:1px;height:53px;background:#dadada"></div>
<svg class="a" style="left:1555px;top:232px" width="4" height="4"><path d="M4 0V4H0Z" fill="#0a84c0"/></svg>
<div class="a c" style="left:1560px;top:183px;width:25px;height:53px"><div class="a t" style="left:3.5px;top:3px">Про</div><div class="a t" style="left:3.5px;top:19px">на</div><div class="a t" style="left:3.5px;top:35px">ком</div></div>
<div class="a" style="left:1559px;top:183px;width:1px;height:53px;background:#dadada"></div>
<svg class="a" style="left:1581px;top:232px" width="4" height="4"><path d="M4 0V4H0Z" fill="#0a84c0"/></svg>
<div class="a c" style="left:1586px;top:183px;width:102px;height:53px"><div class="a t" style="left:3.5px;top:3px">Статус печати</div><div class="a t" style="left:3.5px;top:19px">ценника</div></div>
<div class="a" style="left:1585px;top:183px;width:1px;height:53px;background:#dadada"></div>
<div class="a c" style="left:1689px;top:183px;width:102px;height:53px"><div class="a t" style="left:3.5px;top:3px">Статус загрузки</div><div class="a t" style="left:3.5px;top:19px">в оборудование</div></div>
<div class="a" style="left:1688px;top:183px;width:1px;height:53px;background:#dadada"></div>
<div class="a c" style="left:1792px;top:183px;width:108px;height:53px"></div>
<div class="a" style="left:1791px;top:183px;width:1px;height:53px;background:#dadada"></div>
<div class="a c" style="left:393px;top:236px;width:1406px;height:135px"><div class="a" style="left:0px;top:0px;width:1500px;height:135px;background:#fff"></div><svg class="a" style="left:6px;top:-8px" width="14" height="14"><rect x="0.5" y="0.5" width="13" height="13" rx="2.5" fill="#fff" stroke="#a8a8a8" stroke-width="1"/></svg><svg class="a" style="left:32px;top:-8px" width="14" height="14"><rect x="0.5" y="0.5" width="13" height="13" rx="2.5" fill="#fff" stroke="#a8a8a8" stroke-width="1"/></svg><svg class="a" style="left:58px;top:-8px" width="14" height="14"><rect x="0.5" y="0.5" width="13" height="13" rx="2.5" fill="#fff" stroke="#a8a8a8" stroke-width="1"/><path d="M2.6 7.3L5.5 11.2L11.4 2.6" fill="none" stroke="#4a9de8" stroke-width="1.7" stroke-linecap="round" stroke-linejoin="round"/></svg><div class="a t c" style="left:80.5px;top:-8px;width:56px;"><span class="d">0000346</span></div><div class="a t c" style="left:142px;top:-8px;width:26px;">ПС</div><div class="a t c" style="left:170px;top:-8px;width:63px;text-align:right"><span class="d">08</span>.<span class="d">04</span>.<span class="d">24</span></div><div class="a t c" style="left:240px;top:-8px;width:30px;"><span class="d">10</span>:<span class="d">55</span></div><div class="a t c" style="left:274px;top:-8px;width:128px;">Поставщик колбасы</div><div class="a t c" style="left:407px;top:-8px;width:128px;">Склад Поставщика к...</div><div class="a t c" style="left:540px;top:-8px;width:128px;">ЗАО "ЛюксСофтТорг"</div><div class="a t c" style="left:673px;top:-8px;width:128px;">Магазин <span class="d">13</span></div><div class="a t c" style="left:806px;top:-8px;width:188px;">Поступление в магазин от пост...</div><div class="a t c" style="left:999px;top:-8px;width:68px;">Белорусс...</div><div class="a t c" style="left:1072px;top:-8px;width:38px;">Согл...</div><div class="a t c" style="left:1115px;top:-8px;width:50px;">ДП<span class="d">44444</span></div><svg class="a" style="left:1173px;top:-8px" width="14" height="14"><rect x="0.5" y="0.5" width="13" height="13" rx="2.5" fill="#fff" stroke="#a8a8a8" stroke-width="1"/></svg><div class="a t c" style="left:1196.5px;top:-8px;width:97px;">Распечатан</div><div class="a t c" style="left:1299.5px;top:-8px;width:97px;">Успешно загру...</div><div class="a t c" style="left:1402px;top:-8px;">С</div><div class="a" style="left:1399px;top:10px;width:108px;height:20px;background:#d4fbd4"></div><div class="a" style="left:0px;top:9px;width:1500px;height:1px;background:#e2e2e2"></div><svg class="a" style="left:6px;top:13px" width="14" height="14"><rect x="0.5" y="0.5" width="13" height="13" rx="2.5" fill="#fff" stroke="#a8a8a8" stroke-width="1"/></svg><svg class="a" style="left:32px;top:13px" width="14" height="14"><rect x="0.5" y="0.5" width="13" height="13" rx="2.5" fill="#fff" stroke="#a8a8a8" stroke-width="1"/></svg><svg class="a" style="left:58px;top:13px" width="14" height="14"><rect x="0.5" y="0.5" width="13" height="13" rx="2.5" fill="#fff" stroke="#a8a8a8" stroke-width="1"/><path d="M2.6 7.3L5.5 11.2L11.4 2.6" fill="none" stroke="#4a9de8" stroke-width="1.7" stroke-linecap="round" stroke-linejoin="round"/></svg><div class="a t c" style="left:80.5px;top:13px;width:56px;"><span class="d">00127</span></div><div class="a t c" style="left:142px;top:13px;width:26px;">ПС</div><div class="a t c" style="left:170px;top:13px;width:63px;text-align:right"><span class="d">08</span>.<span class="d">04</span>.<span class="d">24</span></div><div class="a t c" style="left:240px;top:13px;width:30px;"><span class="d">10</span>:<span class="d">55</span></div><div class="a t c" style="left:274px;top:13px;width:128px;">ЗАО "ЛюксСофтТорг"</div><div class="a t c" style="left:407px;top:13px;width:128px;">Магазин <span class="d">14</span></div><div class="a t c" style="left:540px;top:13px;width:128px;">Davronbek</div><div class="a t c" style="left:673px;top:13px;width:128px;">Магазин №<span class="d">1</span> Даврон</div><div class="a t c" style="left:806px;top:13px;width:188px;">Поступление в магазин от пост...</div><div class="a t c" style="left:999px;top:13px;width:68px;">Белорусс...</div><div class="a t c" style="left:1072px;top:13px;width:38px;"></div><div class="a t c" style="left:1115px;top:13px;width:50px;">Д-<span class="d">0010</span></div><svg class="a" style="left:1173px;top:13px" width="14" height="14"><rect x="0.5" y="0.5" width="13" height="13" rx="2.5" fill="#fff" stroke="#a8a8a8" stroke-width="1"/><path d="M2.6 7.3L5.5 11.2L11.4 2.6" fill="none" stroke="#4a9de8" stroke-width="1.7" stroke-linecap="round" stroke-linejoin="round"/></svg><div class="a t c" style="left:1196.5px;top:13px;width:97px;">Распечатан</div><div class="a t c" style="left:1299.5px;top:13px;width:97px;">Успешно загру...</div><div class="a t c" style="left:1402px;top:13px;">Н</div><div class="a" style="left:1193px;top:31px;width:102px;height:20px;background:#d4fbd4"></div><div class="a" style="left:1296px;top:31px;width:102px;height:20px;background:#d4fbd4"></div><div class="a" style="left:0px;top:30px;width:1500px;height:1px;background:#e2e2e2"></div><svg class="a" style="left:6px;top:34px" width="14" height="14"><rect x="0.5" y="0.5" width="13" height="13" rx="2.5" fill="#fff" stroke="#a8a8a8" stroke-width="1"/></svg><svg class="a" style="left:32px;top:34px" width="14" height="14"><rect x="0.5" y="0.5" width="13" height="13" rx="2.5" fill="#fff" stroke="#a8a8a8" stroke-width="1"/></svg><svg class="a" style="left:58px;top:34px" width="14" height="14"><rect x="0.5" y="0.5" width="13" height="13" rx="2.5" fill="#fff" stroke="#a8a8a8" stroke-width="1"/><path d="M2.6 7.3L5.5 11.2L11.4 2.6" fill="none" stroke="#4a9de8" stroke-width="1.7" stroke-linecap="round" stroke-linejoin="round"/></svg><div class="a t c" style="left:80.5px;top:34px;width:56px;"><span class="d">0012888</span></div><div class="a t c" style="left:142px;top:34px;width:26px;">ПС</div><div class="a t c" style="left:170px;top:34px;width:63px;text-align:right"><span class="d">09</span>.<span class="d">04</span>.<span class="d">24</span></div><div class="a t c" style="left:240px;top:34px;width:30px;"><span class="d">10</span>:<span class="d">41</span></div><div class="a t c" style="left:274px;top:34px;width:128px;">ЗАО "ЛюксСофтТорг"</div><div class="a t c" style="left:407px;top:34px;width:128px;">Магазин <span class="d">13</span></div><div class="a t c" style="left:540px;top:34px;width:128px;">ЗАО "ЛюксСофтТорг"</div><div class="a t c" style="left:673px;top:34px;width:128px;">Магазин <span class="d">14</span></div><div class="a t c" style="left:806px;top:34px;width:188px;">Поступление на магазин от дру...</div><div class="a t c" style="left:999px;top:34px;width:68px;">Белорусс...</div><div class="a t c" style="left:1072px;top:34px;width:38px;">пере...</div><div class="a t c" style="left:1115px;top:34px;width:50px;">Д-<span class="d">951</span></div><svg class="a" style="left:1173px;top:34px" width="14" height="14"><rect x="0.5" y="0.5" width="13" height="13" rx="2.5" fill="#fff" stroke="#a8a8a8" stroke-width="1"/></svg><div class="a t c" style="left:1196.5px;top:34px;width:97px;">Не распечатан</div><div class="a t c" style="left:1299.5px;top:34px;width:97px;">Не загружен</div><div class="a t c" style="left:1402px;top:34px;">С</div><div class="a" style="left:1193px;top:52px;width:102px;height:20px;background:#d4fbd4"></div><div class="a" style="left:1296px;top:52px;width:102px;height:20px;background:#d4fbd4"></div><div class="a" style="left:0px;top:51px;width:1500px;height:1px;background:#e2e2e2"></div><svg class="a" style="left:6px;top:55px" width="14" height="14"><rect x="0.5" y="0.5" width="13" height="13" rx="2.5" fill="#fff" stroke="#a8a8a8" stroke-width="1"/></svg><svg class="a" style="left:32px;top:55px" width="14" height="14"><rect x="0.5" y="0.5" width="13" height="13" rx="2.5" fill="#fff" stroke="#a8a8a8" stroke-width="1"/></svg><svg class="a" style="left:58px;top:55px" width="14" height="14"><rect x="0.5" y="0.5" width="13" height="13" rx="2.5" fill="#fff" stroke="#a8a8a8" stroke-width="1"/><path d="M2.6 7.3L5.5 11.2L11.4 2.6" fill="none" stroke="#4a9de8" stroke-width="1.7" stroke-linecap="round" stroke-linejoin="round"/></svg><div class="a t c" style="left:80.5px;top:55px;width:56px;"><span class="d">0000347</span></div><div class="a t c" style="left:142px;top:55px;width:26px;">ПС</div><div class="a t c" style="left:170px;top:55px;width:63px;text-align:right"><span class="d">09</span>.<span class="d">04</span>.<span class="d">24</span></div><div class="a t c" style="left:240px;top:55px;width:30px;"><span class="d">12</span>:<span class="d">18</span></div><div class="a t c" style="left:274px;top:55px;width:128px;">Поставщик колбасы</div><div class="a t c" style="left:407px;top:55px;width:128px;">Склад Поставщика к...</div><div class="a t c" style="left:540px;top:55px;width:128px;">ЗАО "ЛюксСофтТорг"</div><div class="a t c" style="left:673px;top:55px;width:128px;">ЛюксСофтТрейд<span class="d">2</span></div><div class="a t c" style="left:806px;top:55px;width:188px;">Поступление в магазин от пост...</div><div class="a t c" style="left:999px;top:55px;width:68px;">Белорусс...</div><div class="a t c" style="left:1072px;top:55px;width:38px;"></div><div class="a t c" style="left:1115px;top:55px;width:50px;">Д-<span class="d">0011</span></div><svg class="a" style="left:1173px;top:55px" width="14" height="14"><rect x="0.5" y="0.5" width="13" height="13" rx="2.5" fill="#fff" stroke="#a8a8a8" stroke-width="1"/></svg><div class="a t c" style="left:1196.5px;top:55px;width:97px;">Не распечатан</div><div class="a t c" style="left:1299.5px;top:55px;width:97px;">Не загружен</div><div class="a t c" style="left:1402px;top:55px;">С</div><div class="a" style="left:1193px;top:73px;width:102px;height:20px;background:#d4fbd4"></div><div class="a" style="left:1296px;top:73px;width:102px;height:20px;background:#d4fbd4"></div><div class="a" style="left:0px;top:72px;width:1500px;height:1px;background:#e2e2e2"></div><svg class="a" style="left:6px;top:76px" width="14" height="14"><rect x="0.5" y="0.5" width="13" height="13" rx="2.5" fill="#fff" stroke="#a8a8a8" stroke-width="1"/></svg><svg class="a" style="left:32px;top:76px" width="14" height="14"><rect x="0.5" y="0.5" width="13" height="13" rx="2.5" fill="#fff" stroke="#a8a8a8" stroke-width="1"/></svg><svg class="a" style="left:58px;top:76px" width="14" height="14"><rect x="0.5" y="0.5" width="13" height="13" rx="2.5" fill="#fff" stroke="#a8a8a8" stroke-width="1"/><path d="M2.6 7.3L5.5 11.2L11.4 2.6" fill="none" stroke="#4a9de8" stroke-width="1.7" stroke-linecap="round" stroke-linejoin="round"/></svg><div class="a t c" style="left:80.5px;top:76px;width:56px;"><span class="d">0000348</span></div><div class="a t c" style="left:142px;top:76px;width:26px;">ПС</div><div class="a t c" style="left:170px;top:76px;width:63px;text-align:right"><span class="d">09</span>.<span class="d">04</span>.<span class="d">24</span></div><div class="a t c" style="left:240px;top:76px;width:30px;"><span class="d">15</span>:<span class="d">28</span></div><div class="a t c" style="left:274px;top:76px;width:128px;">Поставщик колбасы</div><div class="a t c" style="left:407px;top:76px;width:128px;">Склад Поставщика к...</div><div class="a t c" style="left:540px;top:76px;width:128px;">Поставщик колбасы</div><div class="a t c" style="left:673px;top:76px;width:128px;">Склад Поставщика к...</div><div class="a t c" style="left:806px;top:76px;width:188px;">Ввод начальных остатков</div><div class="a t c" style="left:999px;top:76px;width:68px;">Белорусс...</div><div class="a t c" style="left:1072px;top:76px;width:38px;"></div><div class="a t c" style="left:1115px;top:76px;width:50px;"></div><svg class="a" style="left:1173px;top:76px" width="14" height="14"><rect x="0.5" y="0.5" width="13" height="13" rx="2.5" fill="#fff" stroke="#a8a8a8" stroke-width="1"/></svg><div class="a t c" style="left:1196.5px;top:76px;width:97px;">Не распечатан</div><div class="a t c" style="left:1299.5px;top:76px;width:97px;">Не загружен</div><div class="a t c" style="left:1402px;top:76px;">С</div><div class="a" style="left:1193px;top:94px;width:102px;height:20px;background:#d4fbd4"></div><div class="a" style="left:1296px;top:94px;width:102px;height:20px;background:#d4fbd4"></div><div class="a" style="left:0px;top:93px;width:1500px;height:1px;background:#e2e2e2"></div><svg class="a" style="left:6px;top:97px" width="14" height="14"><rect x="0.5" y="0.5" width="13" height="13" rx="2.5" fill="#fff" stroke="#a8a8a8" stroke-width="1"/></svg><svg class="a" style="left:32px;top:97px" width="14" height="14"><rect x="0.5" y="0.5" width="13" height="13" rx="2.5" fill="#fff" stroke="#a8a8a8" stroke-width="1"/></svg><svg class="a" style="left:58px;top:97px" width="14" height="14"><rect x="0.5" y="0.5" width="13" height="13" rx="2.5" fill="#fff" stroke="#a8a8a8" stroke-width="1"/><path d="M2.6 7.3L5.5 11.2L11.4 2.6" fill="none" stroke="#4a9de8" stroke-width="1.7" stroke-linecap="round" stroke-linejoin="round"/></svg><div class="a t c" style="left:80.5px;top:97px;width:56px;"><span class="d">0000349</span></div><div class="a t c" style="left:142px;top:97px;width:26px;">ПС</div><div class="a t c" style="left:170px;top:97px;width:63px;text-align:right"><span class="d">09</span>.<span class="d">04</span>.<span class="d">24</span></div><div class="a t c" style="left:240px;top:97px;width:30px;"><span class="d">14</span>:<span class="d">46</span></div><div class="a t c" style="left:274px;top:97px;width:128px;">Поставщик колбасы</div><div class="a t c" style="left:407px;top:97px;width:128px;">Склад Поставщика к...</div><div class="a t c" style="left:540px;top:97px;width:128px;">ЗАО "ЛюксСофтТорг"</div><div class="a t c" style="left:673px;top:97px;width:128px;">Магазин <span class="d">13</span></div><div class="a t c" style="left:806px;top:97px;width:188px;">Поступление в магазин от пост...</div><div class="a t c" style="left:999px;top:97px;width:68px;">Белорусс...</div><div class="a t c" style="left:1072px;top:97px;width:38px;"></div><div class="a t c" style="left:1115px;top:97px;width:50px;">ДП<span class="d">44444</span></div><svg class="a" style="left:1173px;top:97px" width="14" height="14"><rect x="0.5" y="0.5" width="13" height="13" rx="2.5" fill="#fff" stroke="#a8a8a8" stroke-width="1"/></svg><div class="a t c" style="left:1196.5px;top:97px;width:97px;">Не распечатан</div><div class="a t c" style="left:1299.5px;top:97px;width:97px;">Не загружен</div><div class="a t c" style="left:1402px;top:97px;">С</div><div class="a" style="left:0px;top:115px;width:1500px;height:20px;background:#d4e5ea"></div><div class="a" style="left:1193px;top:115px;width:102px;height:20px;background:#d4e3c3"></div><div class="a" style="left:1296px;top:115px;width:102px;height:20px;background:#d4e3c3"></div><div class="a" style="left:0px;top:114px;width:1500px;height:1px;background:#e2e2e2"></div><svg class="a" style="left:6px;top:118px" width="14" height="14"><rect x="0.5" y="0.5" width="13" height="13" rx="2.5" fill="#fff" stroke="#a8a8a8" stroke-width="1"/></svg><svg class="a" style="left:32px;top:118px" width="14" height="14"><rect x="0.5" y="0.5" width="13" height="13" rx="2.5" fill="#fff" stroke="#a8a8a8" stroke-width="1"/></svg><svg class="a" style="left:58px;top:118px" width="14" height="14"><rect x="0.5" y="0.5" width="13" height="13" rx="2.5" fill="#fff" stroke="#a8a8a8" stroke-width="1"/><path d="M2.6 7.3L5.5 11.2L11.4 2.6" fill="none" stroke="#4a9de8" stroke-width="1.7" stroke-linecap="round" stroke-linejoin="round"/></svg><div class="a t c" style="left:80.5px;top:118px;width:56px;"><span class="d">7778889</span></div><div class="a t c" style="left:142px;top:118px;width:26px;">ЭЭ</div><div class="a t c" style="left:170px;top:118px;width:63px;text-align:right"><span class="d">09</span>.<span class="d">04</span>.<span class="d">24</span></div><div class="a t c" style="left:240px;top:118px;width:30px;"><span class="d">14</span>:<span class="d">28</span></div><div class="a t c" style="left:274px;top:118px;width:128px;">ПРОДТОВАРЫ ОАО</div><div class="a t c" style="left:407px;top:118px;width:128px;letter-spacing:-0.261px;">Склад ПРОДТОВАРЫ...</div><div class="a t c" style="left:540px;top:118px;width:128px;">ЗАО "ЛюксСофтТорг"</div><div class="a t c" style="left:673px;top:118px;width:128px;">Магазин <span class="d">13</span></div><div class="a t c" style="left:806px;top:118px;width:188px;">Поступление в магазин от пост...</div><div class="a t c" style="left:999px;top:118px;width:68px;">Белорусс...</div><div class="a t c" style="left:1072px;top:118px;width:38px;"></div><div class="a t c" style="left:1115px;top:118px;width:50px;"></div><svg class="a" style="left:1173px;top:118px" width="14" height="14"><rect x="0.5" y="0.5" width="13" height="13" rx="2.5" fill="#fff" stroke="#a8a8a8" stroke-width="1"/></svg><div class="a t c" style="left:1196.5px;top:118px;width:97px;">Не распечатан</div><div class="a t c" style="left:1299.5px;top:118px;width:97px;">Не загружен</div><div class="a t c" style="left:1402px;top:118px;">С</div><div class="a" style="left:0px;top:115px;width:25px;height:20px;border:1px solid #1877a8;box-sizing:border-box"></div><div class="a" style="left:25px;top:0px;width:1px;height:135px;background:#e2e2e2"></div><div class="a" style="left:51px;top:0px;width:1px;height:135px;background:#e2e2e2"></div><div class="a" style="left:77px;top:0px;width:1px;height:135px;background:#e2e2e2"></div><div class="a" style="left:138px;top:0px;width:1px;height:135px;background:#e2e2e2"></div><div class="a" style="left:169px;top:0px;width:1px;height:135px;background:#e2e2e2"></div><div class="a" style="left:236px;top:0px;width:1px;height:135px;background:#e2e2e2"></div><div class="a" style="left:270px;top:0px;width:1px;height:135px;background:#e2e2e2"></div><div class="a" style="left:403px;top:0px;width:1px;height:135px;background:#e2e2e2"></div><div class="a" style="left:536px;top:0px;width:1px;height:135px;background:#e2e2e2"></div><div class="a" style="left:669px;top:0px;width:1px;height:135px;background:#e2e2e2"></div><div class="a" style="left:802px;top:0px;width:1px;height:135px;background:#e2e2e2"></div><div class="a" style="left:995px;top:0px;width:1px;height:135px;background:#e2e2e2"></div><div class="a" style="left:1068px;top:0px;width:1px;height:135px;background:#e2e2e2"></div><div class="a" style="left:1111px;top:0px;width:1px;height:135px;background:#e2e2e2"></div><div class="a" style="left:1166px;top:0px;width:1px;height:135px;background:#e2e2e2"></div><div class="a" style="left:1192px;top:0px;width:1px;height:135px;background:#e2e2e2"></div><div class="a" style="left:1295px;top:0px;width:1px;height:135px;background:#e2e2e2"></div><div class="a" style="left:1398px;top:0px;width:1px;height:135px;background:#e2e2e2"></div></div>
<div class="a" style="left:393px;top:236px;width:1406px;height:1px;background:#e4e4e4"></div>
<div class="a" style="left:393px;top:371px;width:1406px;height:11px;background:#f4f4f4"></div>
<div class="a" style="left:393px;top:372px;width:672px;height:9px;background:#d9d9d9"></div>
<svg class="a" style="left:0;top:0" width="600" height="420"><path d="M402.7 389V403M407.6 389V403M398 393.6H412M398 398.4H412" fill="none" stroke="#3dbdf0" stroke-width="1.3" stroke-linecap="round" stroke-linejoin="round"/><path d="M398.2 389H411.9Q412.6 389 412.6 389.7V402.8Q412.6 403.5 411.9 403.5H398.2Q397.5 403.5 397.5 402.8V389.7Q397.5 389 398.2 389Z" fill="none" stroke="#2b2b2b" stroke-width="1.5" stroke-linecap="round" stroke-linejoin="round"/><path d="M419.5 385V406.5" stroke="#d0d0d0" stroke-width="1"/><path d="M448.5 385V406.5" stroke="#d0d0d0" stroke-width="1"/><path d="M477.5 385V406.5" stroke="#d0d0d0" stroke-width="1"/><path d="M528.5 385V406.5" stroke="#d0d0d0" stroke-width="1"/><path d="M557.5 385V406.5" stroke="#d0d0d0" stroke-width="1"/><path d="M426.5 390.6H441.5" fill="none" stroke="#2b2b2b" stroke-width="1.4" stroke-linecap="round" stroke-linejoin="round"/><path d="M428.8 394.4H439.4" fill="none" stroke="#3dbdf0" stroke-width="1.4" stroke-linecap="round" stroke-linejoin="round"/><path d="M431.2 398.3H437" fill="none" stroke="#2b2b2b" stroke-width="1.4" stroke-linecap="round" stroke-linejoin="round"/><path d="M433.2 402.2H435.6" fill="none" stroke="#3dbdf0" stroke-width="1.4" stroke-linecap="round" stroke-linejoin="round"/><path d="M463.53 388.74L464.95 389.02L465.35 391.34L466.23 391.93L468.52 391.41L469.33 392.61L467.97 394.53L468.17 395.57L470.16 396.83L469.88 398.25L467.56 398.65L466.97 399.53L467.49 401.82L466.29 402.63L464.37 401.27L463.33 401.47L462.07 403.46L460.65 403.18L460.25 400.86L459.37 400.27L457.08 400.79L456.27 399.59L457.63 397.67L457.43 396.63L455.44 395.37L455.72 393.95L458.04 393.55L458.63 392.67L458.11 390.38L459.31 389.57L461.23 390.93L462.27 390.73Z" fill="none" stroke="#2b2b2b" stroke-width="1.3" stroke-linecap="round" stroke-linejoin="round"/><circle cx="462.8" cy="396.1" r="2.4" fill="none" stroke="#3dbdf0" stroke-width="1.4"/><path d="M490.8 390.7H499.4" fill="none" stroke="#2b2b2b" stroke-width="1.4" stroke-linecap="round" stroke-linejoin="round"/><text x="486" y="392.9" font-family="Liberation Sans" font-size="6" font-weight="bold" fill="#3dbdf0" text-anchor="middle">1</text><path d="M490.8 396.5H499.4" fill="none" stroke="#2b2b2b" stroke-width="1.4" stroke-linecap="round" stroke-linejoin="round"/><text x="486" y="398.7" font-family="Liberation Sans" font-size="6" font-weight="bold" fill="#3dbdf0" text-anchor="middle">2</text><path d="M490.8 402.4H499.4" fill="none" stroke="#2b2b2b" stroke-width="1.4" stroke-linecap="round" stroke-linejoin="round"/><text x="486" y="404.59999999999997" font-family="Liberation Sans" font-size="6" font-weight="bold" fill="#3dbdf0" text-anchor="middle">3</text><path d="M506.6 389.6H521.6M506.6 393.6H521.6M506.6 397.6H512.2M506.6 401.6H512.2" fill="none" stroke="#2b2b2b" stroke-width="1.4" stroke-linecap="round" stroke-linejoin="round"/><path d="M518.3 396.2V403.2M514.8 399.7H521.8" fill="none" stroke="#3dbdf0" stroke-width="1.4" stroke-linecap="round" stroke-linejoin="round"/><path d="M538.5 392.4H536.4Q535.4 392.4 535.4 393.4V402.4Q535.4 403.4 536.4 403.4H546.8Q547.8 403.4 547.8 402.4V399.6" fill="none" stroke="#2b2b2b" stroke-width="1.6" stroke-linecap="round" stroke-linejoin="round"/><path d="M542.8 396.6L550.2 388.6M545.2 388.6H550.4V393.8" fill="none" stroke="#3dbdf0" stroke-width="1.5" stroke-linecap="round" stroke-linejoin="round"/><path d="M564.2 401.8V391.8H574.4M571.6 389L574.4 391.8L571.6 394.6" fill="none" stroke="#2b2b2b" stroke-width="1.4" stroke-linecap="round" stroke-linejoin="round"/><path d="M579.6 390.8V402.2H569.4M572.2 399.4L569.4 402.2L572.2 405" fill="none" stroke="#3dbdf0" stroke-width="1.4" stroke-linecap="round" stroke-linejoin="round"/></svg>
<div class="a" style="left:393px;top:410px;width:1406px;height:1px;background:#d6d6d6"></div>
<svg class="a" style="left:1231px;top:389px" width="14" height="14"><rect x="0.5" y="0.5" width="13" height="13" rx="2.5" fill="#fff" stroke="#a8a8a8" stroke-width="1"/><path d="M2.6 7.3L5.5 11.2L11.4 2.6" fill="none" stroke="#4a9de8" stroke-width="1.7" stroke-linecap="round" stroke-linejoin="round"/></svg>
<div class="a t " style="left:1249.6px;top:389px;">Открыт (F<span class="d">6</span>)</div>
<div class="a" style="left:1319px;top:385px;width:163px;height:22px;background:#fff;border:1px solid #c6c6c6;border-radius:3px;box-sizing:border-box"></div>
<div class="a t " style="left:1326.6px;top:389px;">(все)</div>
<svg class="a" style="left:1466px;top:392px" width="12" height="8"><path d="M1 1.2L5.5 5.8L10 1.2" fill="none" stroke="#444" stroke-width="1.2"/></svg>
<div class="a" style="left:1486px;top:385px;width:96px;height:22px;background:#fff;border:1px solid #c6c6c6;border-radius:3px;box-sizing:border-box"></div>
<div class="a" style="left:1586px;top:385px;width:98px;height:22px;background:#fff;border:1px solid #c6c6c6;border-radius:3px;box-sizing:border-box"></div>
<div class="a" style="left:1688px;top:385px;width:162px;height:22px;background:#fff;border:1px solid #c6c6c6;border-radius:3px;box-sizing:border-box"></div>
<svg class="a" style="left:0;top:380px" width="1799" height="30"><rect x="1502" y="9.3" width="14" height="14" rx="2" fill="none" stroke="#2b2b2b" stroke-width="1.6"/><path d="M1506.4 13.7L1511.6 18.9M1511.6 13.7L1506.4 18.9" stroke="#111" stroke-width="1.3"/><path d="M1607 10.6V21.4M1601.8 16H1612.4" stroke="#2b2b2b" stroke-width="1.4"/><path d="M1704.4 19.2L1705.2 15.4L1711.6 9L1714.2 11.6L1707.8 18L1704.4 19.2Z" fill="none" stroke="#2b2b2b" stroke-width="1.3" stroke-linejoin="round"/><path d="M1703 22.4H1714.4" stroke="#3dbdf0" stroke-width="1.2"/></svg>
<div class="a t " style="left:1521.2px;top:389px;">Закрыть</div>
<div class="a t " style="left:1617.4px;top:389px;">Добавить</div>
<div class="a t " style="left:1719.4px;top:389px;">Редактировать</div>
<div class="a" style="left:390px;top:434px;width:107px;height:3px;background:#acd3de"></div>
<div class="a" style="left:390px;top:437px;width:1409px;height:2px;background:#cfcfcf"></div>
<div class="a t " style="left:402.5px;top:417px;">Спецификация</div>
<div class="a t " style="left:509.2px;top:417px;">Сертификаты</div>
<div class="a t " style="left:608.3px;top:417px;">История</div>
<div class="a t " style="left:679.2px;top:417px;">Печатные формы</div>
<div class="a t " style="left:801.7px;top:417px;">Действия</div>
<div class="a t " style="left:876.7px;top:417px;">Ошибки загрузки в оборудование</div>
<div class="a" style="left:391px;top:439px;width:1px;height:270px;background:#cfcfcf"></div>
<div class="a" style="left:392px;top:439px;width:1407px;height:53px;background:#f0f0f0"></div>
<div class="a c" style="left:392px;top:439px;width:54px;height:53px"><div class="a t" style="left:20px;top:3px">Номер</div><div class="a t" style="left:20px;top:19px"></div><div class="a t" style="left:20px;top:35px">строки</div></div>
<div class="a c" style="left:447px;top:439px;width:102px;height:53px"><div class="a t" style="left:0;top:3px;width:102px;text-align:center">Штрихкод</div></div>
<div class="a" style="left:446px;top:439px;width:1px;height:53px;background:#dadada"></div>
<div class="a c" style="left:550px;top:439px;width:72px;height:53px"><div class="a t" style="left:0;top:3px;width:72px;text-align:center">Код</div></div>
<div class="a" style="left:549px;top:439px;width:1px;height:53px;background:#dadada"></div>
<div class="a c" style="left:623px;top:439px;width:192px;height:53px"><div class="a t" style="left:0;top:3px;width:192px;text-align:center">Наименование</div></div>
<div class="a" style="left:622px;top:439px;width:1px;height:53px;background:#dadada"></div>
<div class="a c" style="left:816px;top:439px;width:30px;height:53px"><div class="a t" style="left:3.5px;top:3px">Ед.</div><div class="a t" style="left:3.5px;top:19px">изм.</div></div>
<div class="a" style="left:815px;top:439px;width:1px;height:53px;background:#dadada"></div>
<div class="a c" style="left:847px;top:439px;width:132px;height:53px"><div class="a t" style="left:0;top:3px;width:132px;text-align:center">Партия</div></div>
<div class="a" style="left:846px;top:439px;width:1px;height:53px;background:#dadada"></div>
<div class="a c" style="left:980px;top:439px;width:72px;height:53px"><div class="a t" style="left:0;top:3px;width:72px;text-align:center">Код партии</div></div>
<div class="a" style="left:979px;top:439px;width:1px;height:53px;background:#dadada"></div>
<div class="a c" style="left:1053px;top:439px;width:102px;height:53px"><div class="a t" style="left:3.5px;top:3px">Штрихкод</div><div class="a t" style="left:3.5px;top:19px">упаковки</div></div>
<div class="a" style="left:1052px;top:439px;width:1px;height:53px;background:#dadada"></div>
<div class="a c" style="left:1156px;top:439px;width:30px;height:53px"><div class="a t" style="left:3.5px;top:3px">Ед. изм.</div><div class="a t" style="left:3.5px;top:19px">упак</div></div>
<div class="a" style="left:1155px;top:439px;width:1px;height:53px;background:#dadada"></div>
<div class="a c" style="left:1187px;top:439px;width:42px;height:53px"><div class="a t" style="left:3.5px;top:3px">Кол-во</div><div class="a t" style="left:3.5px;top:19px">в</div><div class="a t" style="left:3.5px;top:35px">упаковке</div></div>
<div class="a" style="left:1186px;top:439px;width:1px;height:53px;background:#dadada"></div>
<div class="a c" style="left:1230px;top:439px;width:48px;height:53px"><div class="a t" style="left:3.5px;top:3px">Кол-во</div><div class="a t" style="left:3.5px;top:19px">упаковок</div></div>
<div class="a" style="left:1229px;top:439px;width:1px;height:53px;background:#dadada"></div>
<div class="a c" style="left:1279px;top:439px;width:48px;height:53px"><div class="a t" style="left:0;top:3px;width:48px;text-align:center">Кол-во</div></div>
<div class="a" style="left:1278px;top:439px;width:1px;height:53px;background:#dadada"></div>
<div class="a c" style="left:1328px;top:439px;width:48px;height:53px"><div class="a t" style="left:3.5px;top:3px">Кол-во</div><div class="a t" style="left:3.5px;top:19px">(расценка)</div></div>
<div class="a" style="left:1327px;top:439px;width:1px;height:53px;background:#dadada"></div>
<div class="a c" style="left:1377px;top:439px;width:48px;height:53px"><div class="a t" style="left:3.5px;top:3px">Кол-во</div><div class="a t" style="left:3.5px;top:19px">(поставлено)</div></div>
<div class="a" style="left:1376px;top:439px;width:1px;height:53px;background:#dadada"></div>
<div class="a c" style="left:1426px;top:439px;width:66px;height:53px"><div class="a t" style="left:3.5px;top:3px">Кол-во</div><div class="a t" style="left:3.5px;top:19px">марок</div></div>
<div class="a" style="left:1425px;top:439px;width:1px;height:53px;background:#dadada"></div>
<div class="a c" style="left:1493px;top:439px;width:66px;height:53px"><div class="a t" style="left:3.5px;top:3px">Остаток</div><div class="a t" style="left:3.5px;top:19px">(до)</div></div>
<div class="a" style="left:1492px;top:439px;width:1px;height:53px;background:#dadada"></div>
<div class="a c" style="left:1560px;top:439px;width:48px;height:53px"><div class="a t" style="left:3.5px;top:3px">Кол-во</div><div class="a t" style="left:3.5px;top:19px">(возврат)</div></div>
<div class="a" style="left:1559px;top:439px;width:1px;height:53px;background:#dadada"></div>
<div class="a c" style="left:1609px;top:439px;width:72px;height:53px"><div class="a t" style="left:0;top:3px;width:72px;text-align:center">Вид цен</div></div>
<div class="a" style="left:1608px;top:439px;width:1px;height:53px;background:#dadada"></div>
<div class="a c" style="left:1682px;top:439px;width:48px;height:53px"><div class="a t" style="left:0;top:3px;width:48px;text-align:center">Цена</div></div>
<div class="a" style="left:1681px;top:439px;width:1px;height:53px;background:#dadada"></div>
<div class="a c" style="left:1731px;top:439px;width:60px;height:53px"><div class="a t" style="left:0;top:3px;width:60px;text-align:center">Сумма</div></div>
<div class="a" style="left:1730px;top:439px;width:1px;height:53px;background:#dadada"></div>
<div class="a c" style="left:1792px;top:439px;width:108px;height:53px"><div class="a t" style="left:3.5px;top:3px">Н</div><div class="a t" style="left:3.5px;top:19px">н</div></div>
<div class="a" style="left:1791px;top:439px;width:1px;height:53px;background:#dadada"></div>
<svg class="a" style="left:394px;top:443px" width="14" height="14"><circle cx="7.1" cy="6.8" r="5.2" fill="none" stroke="#3dbdf0" stroke-width="1.4"/><path d="M4.8 8L7.1 5.6L9.4 8" fill="none" stroke="#2b2b2b" stroke-width="1.3"/></svg>
<div class="a c" style="left:392px;top:492px;width:1407px;height:207px"><div class="a" style="left:0px;top:0px;width:1407px;height:210px;background:#fff"></div><div class="a" style="left:936px;top:0px;width:48px;height:210px;background:#e0ffff"></div><div class="a" style="left:985px;top:0px;width:48px;height:210px;background:#ffe0ff"></div><div class="a" style="left:0px;top:1px;width:1407px;height:20px;background:#d4e5ea"></div><div class="a" style="left:936px;top:1px;width:48px;height:20px;background:#bde3e6"></div><div class="a" style="left:985px;top:1px;width:48px;height:20px;background:#d5e0e8"></div><div class="a t c" style="left:0px;top:4px;width:51px;text-align:right"><span class="d">1</span></div><div class="a t c" style="left:58px;top:4px;width:98px;"><span class="d">4810268018671</span></div><div class="a t c" style="left:161px;top:4px;width:68px;"><span class="d">17491</span></div><div class="a t c" style="left:234px;top:4px;width:188px;">МОЛОКО УЛЬТРАП.САВУШ.ПР...</div><div class="a t c" style="left:427px;top:4px;width:26px;">пор.</div><div class="a t c" style="left:767px;top:4px;width:26px;">пор.</div><div class="a t c" style="left:795px;top:4px;width:39px;text-align:right"><span class="d">6</span></div><div class="a t c" style="left:838px;top:4px;width:45px;text-align:right"><span class="d">24</span></div><div class="a t c" style="left:887px;top:4px;width:45px;text-align:right"><span class="d">144</span></div><div class="a t c" style="left:936px;top:4px;width:45px;text-align:right"><span class="d">144</span></div><div class="a t c" style="left:985px;top:4px;width:45px;text-align:right"><span class="d">144</span></div><div class="a t c" style="left:1101px;top:4px;width:63px;text-align:right"><span class="d">23</span></div><div class="a t c" style="left:1220px;top:4px;width:68px;">Поставщи...</div><div class="a t c" style="left:1290px;top:4px;width:45px;text-align:right"><span class="d">1</span>,<span class="d">12</span></div><div class="a t c" style="left:1339px;top:4px;width:57px;text-align:right"><span class="d">161</span>,<span class="d">28</span></div><div class="a" style="left:0px;top:21px;width:1407px;height:1px;background:#e2e2e2"></div><div class="a t c" style="left:0px;top:25px;width:51px;text-align:right"><span class="d">2</span></div><div class="a t c" style="left:58px;top:25px;width:98px;"><span class="d">4607161624647</span></div><div class="a t c" style="left:161px;top:25px;width:68px;"><span class="d">17487</span></div><div class="a t c" style="left:234px;top:25px;width:188px;letter-spacing:-0.003px;">МОЛОКО УЛЬТРАП.ПРОСТОКВ...</div><div class="a t c" style="left:427px;top:25px;width:26px;">пор.</div><div class="a t c" style="left:664px;top:25px;width:98px;"><span class="d">4607161624647</span></div><div class="a t c" style="left:767px;top:25px;width:26px;">пор.</div><div class="a t c" style="left:795px;top:25px;width:39px;text-align:right"><span class="d">1</span></div><div class="a t c" style="left:838px;top:25px;width:45px;text-align:right"><span class="d">100</span></div><div class="a t c" style="left:887px;top:25px;width:45px;text-align:right"><span class="d">100</span></div><div class="a t c" style="left:936px;top:25px;width:45px;text-align:right"><span class="d">100</span></div><div class="a t c" style="left:985px;top:25px;width:45px;text-align:right"><span class="d">100</span></div><div class="a t c" style="left:1101px;top:25px;width:63px;text-align:right"><span class="d">15</span></div><div class="a t c" style="left:1220px;top:25px;width:68px;">Поставщи...</div><div class="a t c" style="left:1290px;top:25px;width:45px;text-align:right"><span class="d">1</span>,<span class="d">35</span></div><div class="a t c" style="left:1339px;top:25px;width:57px;text-align:right"><span class="d">135</span></div><div class="a" style="left:0px;top:42px;width:1407px;height:1px;background:#e2e2e2"></div><div class="a t c" style="left:0px;top:46px;width:51px;text-align:right"><span class="d">3</span></div><div class="a t c" style="left:58px;top:46px;width:98px;"><span class="d">4607161624661</span></div><div class="a t c" style="left:161px;top:46px;width:68px;"><span class="d">17488</span></div><div class="a t c" style="left:234px;top:46px;width:188px;letter-spacing:-0.003px;">МОЛОКО УЛЬТРАП.ПРОСТОКВ...</div><div class="a t c" style="left:427px;top:46px;width:26px;">пор.</div><div class="a t c" style="left:887px;top:46px;width:45px;text-align:right"><span class="d">93</span></div><div class="a t c" style="left:936px;top:46px;width:45px;text-align:right"><span class="d">93</span></div><div class="a t c" style="left:985px;top:46px;width:45px;text-align:right"><span class="d">93</span></div><div class="a t c" style="left:1101px;top:46px;width:63px;text-align:right"><span class="d">15</span></div><div class="a t c" style="left:1220px;top:46px;width:68px;">Поставщи...</div><div class="a t c" style="left:1290px;top:46px;width:45px;text-align:right"><span class="d">1</span>,<span class="d">43</span></div><div class="a t c" style="left:1339px;top:46px;width:57px;text-align:right"><span class="d">132</span>,<span class="d">99</span></div><div class="a" style="left:0px;top:63px;width:1407px;height:1px;background:#e2e2e2"></div><div class="a t c" style="left:0px;top:67px;width:51px;text-align:right"><span class="d">4</span></div><div class="a t c" style="left:58px;top:67px;width:98px;"><span class="d">4810268022463</span></div><div class="a t c" style="left:161px;top:67px;width:68px;"><span class="d">17324</span></div><div class="a t c" style="left:234px;top:67px;width:188px;">МОЛОКО ПИТ.УЛЬТРАП.<span class="d">1</span>.<span class="d">5</span>% П...</div><div class="a t c" style="left:427px;top:67px;width:26px;">пор.</div><div class="a t c" style="left:767px;top:67px;width:26px;">пор.</div><div class="a t c" style="left:795px;top:67px;width:39px;text-align:right"><span class="d">6</span></div><div class="a t c" style="left:838px;top:67px;width:45px;text-align:right"><span class="d">24</span></div><div class="a t c" style="left:887px;top:67px;width:45px;text-align:right"><span class="d">144</span></div><div class="a t c" style="left:936px;top:67px;width:45px;text-align:right"><span class="d">144</span></div><div class="a t c" style="left:985px;top:67px;width:45px;text-align:right"><span class="d">144</span></div><div class="a t c" style="left:1101px;top:67px;width:63px;text-align:right"><span class="d">21</span></div><div class="a t c" style="left:1220px;top:67px;width:68px;">Поставщи...</div><div class="a t c" style="left:1290px;top:67px;width:45px;text-align:right"><span class="d">1</span>,<span class="d">02</span></div><div class="a t c" style="left:1339px;top:67px;width:57px;text-align:right"><span class="d">146</span>,<span class="d">88</span></div><div class="a" style="left:0px;top:84px;width:1407px;height:1px;background:#e2e2e2"></div><div class="a t c" style="left:0px;top:88px;width:51px;text-align:right"><span class="d">5</span></div><div class="a t c" style="left:58px;top:88px;width:98px;"><span class="d">4810268023880</span></div><div class="a t c" style="left:161px;top:88px;width:68px;"><span class="d">17171</span></div><div class="a t c" style="left:234px;top:88px;width:188px;letter-spacing:-0.289px;">МОЛОКО БРЕСТ-ЛИТОВСКОЕ <span class="d">2</span>....</div><div class="a t c" style="left:427px;top:88px;width:26px;">пор.</div><div class="a t c" style="left:767px;top:88px;width:26px;">пор.</div><div class="a t c" style="left:795px;top:88px;width:39px;text-align:right"><span class="d">6</span></div><div class="a t c" style="left:838px;top:88px;width:45px;text-align:right"><span class="d">24</span></div><div class="a t c" style="left:887px;top:88px;width:45px;text-align:right"><span class="d">144</span></div><div class="a t c" style="left:936px;top:88px;width:45px;text-align:right"><span class="d">144</span></div><div class="a t c" style="left:985px;top:88px;width:45px;text-align:right"><span class="d">144</span></div><div class="a t c" style="left:1101px;top:88px;width:63px;text-align:right"><span class="d">6</span></div><div class="a t c" style="left:1220px;top:88px;width:68px;">Поставщи...</div><div class="a t c" style="left:1290px;top:88px;width:45px;text-align:right"><span class="d">1</span>,<span class="d">26</span></div><div class="a t c" style="left:1339px;top:88px;width:57px;text-align:right"><span class="d">181</span>,<span class="d">44</span></div><div class="a" style="left:0px;top:105px;width:1407px;height:1px;background:#e2e2e2"></div><div class="a t c" style="left:0px;top:109px;width:51px;text-align:right"><span class="d">6</span></div><div class="a t c" style="left:58px;top:109px;width:98px;"><span class="d">4811269005578</span></div><div class="a t c" style="left:161px;top:109px;width:68px;"><span class="d">17252</span></div><div class="a t c" style="left:234px;top:109px;width:188px;letter-spacing:-0.232px;">МОЛОКО ОТБОРНОЕ <span class="d">3</span>.<span class="d">4</span>-<span class="d">6</span>% ПЭ...</div><div class="a t c" style="left:427px;top:109px;width:26px;">пор.</div><div class="a t c" style="left:767px;top:109px;width:26px;">пор.</div><div class="a t c" style="left:795px;top:109px;width:39px;text-align:right"><span class="d">6</span></div><div class="a t c" style="left:838px;top:109px;width:45px;text-align:right"><span class="d">19</span></div><div class="a t c" style="left:887px;top:109px;width:45px;text-align:right"><span class="d">114</span></div><div class="a t c" style="left:936px;top:109px;width:45px;text-align:right"><span class="d">114</span></div><div class="a t c" style="left:985px;top:109px;width:45px;text-align:right"><span class="d">114</span></div><div class="a t c" style="left:1101px;top:109px;width:63px;text-align:right"><span class="d">16</span></div><div class="a t c" style="left:1220px;top:109px;width:68px;">Поставщи...</div><div class="a t c" style="left:1290px;top:109px;width:45px;text-align:right"><span class="d">1</span>,<span class="d">13</span></div><div class="a t c" style="left:1339px;top:109px;width:57px;text-align:right"><span class="d">128</span>,<span class="d">82</span></div><div class="a" style="left:0px;top:126px;width:1407px;height:1px;background:#e2e2e2"></div><div class="a t c" style="left:0px;top:130px;width:51px;text-align:right"><span class="d">7</span></div><div class="a t c" style="left:58px;top:130px;width:98px;"><span class="d">4607161624623</span></div><div class="a t c" style="left:161px;top:130px;width:68px;"><span class="d">17486</span></div><div class="a t c" style="left:234px;top:130px;width:188px;letter-spacing:-0.003px;">МОЛОКО УЛЬТРАП.ПРОСТОКВ...</div><div class="a t c" style="left:427px;top:130px;width:26px;">пор.</div><div class="a t c" style="left:664px;top:130px;width:98px;"><span class="d">4607161624623</span></div><div class="a t c" style="left:767px;top:130px;width:26px;">пор.</div><div class="a t c" style="left:795px;top:130px;width:39px;text-align:right"><span class="d">1</span></div><div class="a t c" style="left:838px;top:130px;width:45px;text-align:right"><span class="d">79</span></div><div class="a t c" style="left:887px;top:130px;width:45px;text-align:right"><span class="d">79</span></div><div class="a t c" style="left:936px;top:130px;width:45px;text-align:right"><span class="d">79</span></div><div class="a t c" style="left:985px;top:130px;width:45px;text-align:right"><span class="d">79</span></div><div class="a t c" style="left:1101px;top:130px;width:63px;text-align:right"><span class="d">26</span></div><div class="a t c" style="left:1220px;top:130px;width:68px;">Поставщи...</div><div class="a t c" style="left:1290px;top:130px;width:45px;text-align:right"><span class="d">1</span>,<span class="d">27</span></div><div class="a t c" style="left:1339px;top:130px;width:57px;text-align:right"><span class="d">100</span>,<span class="d">33</span></div><div class="a" style="left:0px;top:147px;width:1407px;height:1px;background:#e2e2e2"></div><div class="a t c" style="left:0px;top:151px;width:51px;text-align:right"><span class="d">8</span></div><div class="a t c" style="left:58px;top:151px;width:98px;"><span class="d">4810268024917</span></div><div class="a t c" style="left:161px;top:151px;width:68px;"><span class="d">17461</span></div><div class="a t c" style="left:234px;top:151px;width:188px;">МОЛОКО УЛЬТРАП.<span class="d">3</span>.<span class="d">1</span> % ТБА <span class="d">1</span>...</div><div class="a t c" style="left:427px;top:151px;width:26px;">пор.</div><div class="a t c" style="left:767px;top:151px;width:26px;">пор.</div><div class="a t c" style="left:795px;top:151px;width:39px;text-align:right"><span class="d">12</span></div><div class="a t c" style="left:838px;top:151px;width:45px;text-align:right"><span class="d">9</span></div><div class="a t c" style="left:887px;top:151px;width:45px;text-align:right"><span class="d">108</span></div><div class="a t c" style="left:936px;top:151px;width:45px;text-align:right"><span class="d">108</span></div><div class="a t c" style="left:985px;top:151px;width:45px;text-align:right"><span class="d">108</span></div><div class="a t c" style="left:1101px;top:151px;width:63px;text-align:right"><span class="d">2</span></div><div class="a t c" style="left:1220px;top:151px;width:68px;">Поставщи...</div><div class="a t c" style="left:1290px;top:151px;width:45px;text-align:right"><span class="d">1</span>,<span class="d">42</span></div><div class="a t c" style="left:1339px;top:151px;width:57px;text-align:right"><span class="d">153</span>,<span class="d">36</span></div><div class="a" style="left:0px;top:168px;width:1407px;height:1px;background:#e2e2e2"></div><div class="a t c" style="left:0px;top:172px;width:51px;text-align:right"><span class="d">9</span></div><div class="a t c" style="left:58px;top:172px;width:98px;"><span class="d">4811269007176</span></div><div class="a t c" style="left:161px;top:172px;width:68px;"><span class="d">17209</span></div><div class="a t c" style="left:234px;top:172px;width:188px;letter-spacing:-0.071px;">МОЛОКО ЗДРАВУШКА <span class="d">2</span>% ПЭТ ...</div><div class="a t c" style="left:427px;top:172px;width:26px;">пор.</div><div class="a t c" style="left:887px;top:172px;width:45px;text-align:right"><span class="d">98</span></div><div class="a t c" style="left:936px;top:172px;width:45px;text-align:right"><span class="d">98</span></div><div class="a t c" style="left:985px;top:172px;width:45px;text-align:right"><span class="d">98</span></div><div class="a t c" style="left:1101px;top:172px;width:63px;text-align:right"><span class="d">42</span></div><div class="a t c" style="left:1220px;top:172px;width:68px;">Поставщи...</div><div class="a t c" style="left:1290px;top:172px;width:45px;text-align:right"><span class="d">1</span>,<span class="d">02</span></div><div class="a t c" style="left:1339px;top:172px;width:57px;text-align:right"><span class="d">99</span>,<span class="d">96</span></div><div class="a" style="left:0px;top:189px;width:1407px;height:1px;background:#e2e2e2"></div><div class="a t c" style="left:0px;top:193px;width:51px;text-align:right"><span class="d">10</span></div><div class="a t c" style="left:58px;top:193px;width:98px;"><span class="d">4810319015079</span></div><div class="a t c" style="left:161px;top:193px;width:68px;"><span class="d">17237</span></div><div class="a t c" style="left:234px;top:193px;width:188px;letter-spacing:-0.055px;">МОЛОКО МИНСКАЯ МАРКА <span class="d">2</span>.<span class="d">5</span>...</div><div class="a t c" style="left:427px;top:193px;width:26px;">пор.</div><div class="a t c" style="left:887px;top:193px;width:45px;text-align:right"><span class="d">100</span></div><div class="a t c" style="left:936px;top:193px;width:45px;text-align:right"><span class="d">100</span></div><div class="a t c" style="left:985px;top:193px;width:45px;text-align:right"><span class="d">100</span></div><div class="a t c" style="left:1220px;top:193px;width:68px;">Поставщи...</div><div class="a t c" style="left:1290px;top:193px;width:45px;text-align:right"><span class="d">0</span>,<span class="d">86</span></div><div class="a t c" style="left:1339px;top:193px;width:57px;text-align:right"><span class="d">86</span></div><div class="a" style="left:54px;top:0px;width:1px;height:210px;background:#e2e2e2"></div><div class="a" style="left:157px;top:0px;width:1px;height:210px;background:#e2e2e2"></div><div class="a" style="left:230px;top:0px;width:1px;height:210px;background:#e2e2e2"></div><div class="a" style="left:423px;top:0px;width:1px;height:210px;background:#e2e2e2"></div><div class="a" style="left:454px;top:0px;width:1px;height:210px;background:#e2e2e2"></div><div class="a" style="left:587px;top:0px;width:1px;height:210px;background:#e2e2e2"></div><div class="a" style="left:660px;top:0px;width:1px;height:210px;background:#e2e2e2"></div><div class="a" style="left:763px;top:0px;width:1px;height:210px;background:#e2e2e2"></div><div class="a" style="left:794px;top:0px;width:1px;height:210px;background:#e2e2e2"></div><div class="a" style="left:837px;top:0px;width:1px;height:210px;background:#e2e2e2"></div><div class="a" style="left:886px;top:0px;width:1px;height:210px;background:#e2e2e2"></div><div class="a" style="left:935px;top:0px;width:1px;height:210px;background:#e2e2e2"></div><div class="a" style="left:984px;top:0px;width:1px;height:210px;background:#e2e2e2"></div><div class="a" style="left:1033px;top:0px;width:1px;height:210px;background:#e2e2e2"></div><div class="a" style="left:1100px;top:0px;width:1px;height:210px;background:#e2e2e2"></div><div class="a" style="left:1167px;top:0px;width:1px;height:210px;background:#e2e2e2"></div><div class="a" style="left:1216px;top:0px;width:1px;height:210px;background:#e2e2e2"></div><div class="a" style="left:1289px;top:0px;width:1px;height:210px;background:#e2e2e2"></div><div class="a" style="left:1338px;top:0px;width:1px;height:210px;background:#e2e2e2"></div><div class="a" style="left:1399px;top:0px;width:1px;height:210px;background:#e2e2e2"></div></div>
<svg class="a" style="left:0;top:0" width="1799" height="699"><rect x="10.5" y="163.5" width="161" height="28" rx="1.5" fill="none" stroke="#ff0000" stroke-width="3"/><rect x="388.5" y="346.5" width="1299" height="30" rx="1.5" fill="none" stroke="#ff0000" stroke-width="3"/><rect x="668.5" y="408.5" width="119" height="28" rx="1.5" fill="none" stroke="#ff0000" stroke-width="3"/><rect x="792.5" y="410.5" width="71" height="27" rx="1.5" fill="none" stroke="#ff0000" stroke-width="3"/><path d="M598.5 487L660 446" stroke="#ff0000" stroke-width="3.6" stroke-linecap="round"/><path d="M670 440.2L655.6 443.6L661.4 452Z" fill="#ff0000" stroke="#ff0000" stroke-width="1" stroke-linejoin="round"/><path d="M910.2 489L868 448.5" stroke="#ff0000" stroke-width="3.6" stroke-linecap="round"/><path d="M860.7 441.9L874.6 448.8L867.6 455.6Z" fill="#ff0000" stroke="#ff0000" stroke-width="1" stroke-linejoin="round"/></svg></body></html>
